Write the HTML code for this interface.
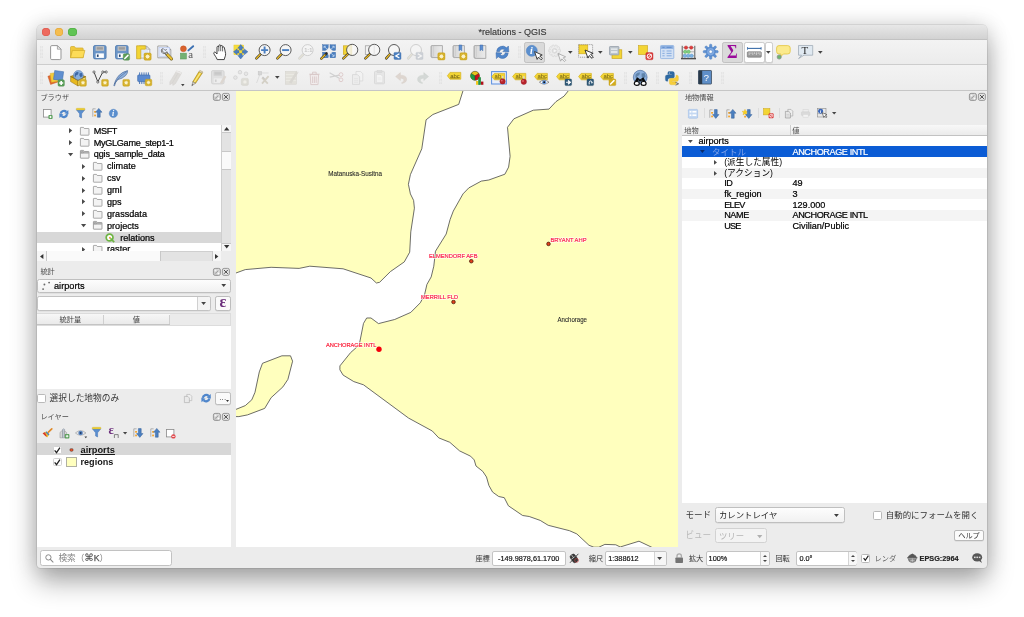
<!DOCTYPE html>
<html lang="ja">
<head>
<meta charset="utf-8">
<title>*relations - QGIS</title>
<style>
*{box-sizing:border-box;margin:0;padding:0}
html,body{width:1024px;height:617px;overflow:hidden;background:#fff}
body{font-family:"Liberation Sans","Noto Sans CJK JP",sans-serif;font-size:9.1px;color:#000;position:relative}
.abs{position:absolute}
#win{position:absolute;left:36.5px;top:24.5px;width:950.6px;height:543.3px;background:#ececec;border-radius:4.5px 4.5px 3.5px 3.5px;
 box-shadow:0 0 0 0.5px rgba(0,0,0,.15),0 14px 27px rgba(0,0,0,.32),0 0 21px rgba(0,0,0,.15)}
#winclip{position:absolute;left:0;top:0;width:100%;height:100%;border-radius:4.5px 4.5px 3.5px 3.5px;overflow:hidden}
/* coordinates inside #page are absolute page coords */
#page{position:absolute;left:-36.5px;top:-24.5px;width:1024px;height:617px;will-change:transform}
#titlebar{left:36px;top:24px;width:952px;height:16px;background:linear-gradient(#e9e9e9,#d2d2d2);border-bottom:0.5px solid #c2c2c2}
#title{left:412.5px;top:26.9px;width:200px;text-align:center;font-size:9px;line-height:11px;color:#3a3a3a;-webkit-text-stroke:.15px #3a3a3a}
.tl{position:absolute;top:28.1px;width:8.2px;height:8.2px;border-radius:50%}
.tb{position:absolute;left:36px;width:952px;background:linear-gradient(#f3f3f3,#ececec)}
.t{position:absolute;white-space:nowrap;line-height:12px}
.j{font-family:"Liberation Sans","Noto Sans CJK JP",sans-serif}
.ptitle{position:absolute;font-size:7.2px;line-height:10px;color:#4a4a4a;white-space:nowrap}
.dockbtn{position:absolute;width:7.4px;height:7.2px;border:0.8px solid #8a8a8a;border-radius:1.6px;background:#e4e4e4}
.white{position:absolute;background:#fff}
.row{position:absolute;white-space:nowrap;line-height:12px;font-size:9.1px;-webkit-text-stroke:.22px currentColor}
.cap{letter-spacing:-.4px}
.ns{-webkit-text-stroke:0}
svg{position:absolute;overflow:visible}

.combo{background:linear-gradient(#fdfdfd,#f1f1f1);border:.7px solid #bfbfbf;border-radius:2.4px;box-shadow:0 .5px .6px rgba(0,0,0,.1)}
.chk{background:#fff;border:.7px solid #b9b9b9;border-radius:1.6px}

.sbox{background:#fff;border:.7px solid #c4c4c4;border-radius:2px}
.sb{font-size:7.3px;color:#111;-webkit-text-stroke:.18px currentColor}
.spin{width:9.1px;height:13px;background:#f7f7f7;border-left:.6px solid #d4d4d4;border-radius:0 2px 2px 0}
.spin:before{content:"";position:absolute;left:2.3px;top:2.7px;border:2.3px solid transparent;border-top:0;border-bottom:2.2px solid #444}
.spin:after{content:"";position:absolute;left:2.3px;top:8.3px;border:2.3px solid transparent;border-bottom:0;border-top:2.2px solid #444}
.sbl{font-size:7.2px;color:#3c3c3c}
</style>
</head>
<body>
<div id="win"><div id="winclip"><div id="page">

<!-- title bar -->
<div id="titlebar" class="abs"></div>
<div class="tl" style="left:42px;background:#ee6a5e;box-shadow:inset 0 0 0 .5px #d95548"></div>
<div class="tl" style="left:55.2px;background:#f5bd4f;box-shadow:inset 0 0 0 .5px #dea133"></div>
<div class="tl" style="left:68.4px;background:#61c455;box-shadow:inset 0 0 0 .5px #4aa73c"></div>
<div id="title" class="abs">*relations - QGIS</div>

<!-- toolbars -->
<div class="tb" style="top:40px;height:24.9px;border-bottom:0.9px solid #cdcdcd"></div>
<div class="tb" style="top:64.6px;height:26.4px;border-bottom:1.1px solid #c6c6c6"></div>
<div id="icons1"><svg style="left:40px;top:46.2px" width="3" height="12" viewBox="0 0 3 12"><path d="M.7 0V12M2.3 0V12" stroke="#cdcdcd" stroke-width=".6" stroke-dasharray=".7 .7"/></svg>
<svg style="left:203.2px;top:46.2px" width="3" height="12" viewBox="0 0 3 12"><path d="M.7 0V12M2.3 0V12" stroke="#cdcdcd" stroke-width=".6" stroke-dasharray=".7 .7"/></svg>
<svg style="left:518.2px;top:46.2px" width="3" height="12" viewBox="0 0 3 12"><path d="M.7 0V12M2.3 0V12" stroke="#cdcdcd" stroke-width=".6" stroke-dasharray=".7 .7"/></svg>
<svg style="left:40px;top:71.8px" width="3" height="12" viewBox="0 0 3 12"><path d="M.7 0V12M2.3 0V12" stroke="#cdcdcd" stroke-width=".6" stroke-dasharray=".7 .7"/></svg>
<svg style="left:159.6px;top:71.8px" width="3" height="12" viewBox="0 0 3 12"><path d="M.7 0V12M2.3 0V12" stroke="#cdcdcd" stroke-width=".6" stroke-dasharray=".7 .7"/></svg>
<svg style="left:439.2px;top:71.8px" width="3" height="12" viewBox="0 0 3 12"><path d="M.7 0V12M2.3 0V12" stroke="#cdcdcd" stroke-width=".6" stroke-dasharray=".7 .7"/></svg>
<svg style="left:624.2px;top:71.8px" width="3" height="12" viewBox="0 0 3 12"><path d="M.7 0V12M2.3 0V12" stroke="#cdcdcd" stroke-width=".6" stroke-dasharray=".7 .7"/></svg>
<svg style="left:656.2px;top:71.8px" width="3" height="12" viewBox="0 0 3 12"><path d="M.7 0V12M2.3 0V12" stroke="#cdcdcd" stroke-width=".6" stroke-dasharray=".7 .7"/></svg>
<svg style="left:688.6px;top:71.8px" width="3" height="12" viewBox="0 0 3 12"><path d="M.7 0V12M2.3 0V12" stroke="#cdcdcd" stroke-width=".6" stroke-dasharray=".7 .7"/></svg>
<svg style="left:720.8px;top:71.8px" width="3" height="12" viewBox="0 0 3 12"><path d="M.7 0V12M2.3 0V12" stroke="#cdcdcd" stroke-width=".6" stroke-dasharray=".7 .7"/></svg>
<svg style="left:50.2px;top:45px" width="11.6" height="15.2" viewBox="0 0 11.6 15.2"><path d="M.6 1.8Q.6 .6 1.8 .6L7.4 .6L11 4.2L11 13.4Q11 14.6 9.8 14.6L1.8 14.6Q.6 14.6 .6 13.4Z" fill="#fff" stroke="#8c8c8c" stroke-width=".9"/><path d="M7.4 .6L7.4 4.2L11 4.2Z" fill="#ededed" stroke="#8c8c8c" stroke-width=".7" stroke-linejoin="round"/></svg>
<svg style="left:70px;top:46px" width="15.4" height="12.2" viewBox="0 0 15.4 12.2"><path d="M.5 1.5Q.5 .5 1.5 .5L4.4 .5L5.6 2L12.4 2Q13.2 2 13.2 2.8L13.2 11.6L.5 11.6Z" fill="#f1c93c" stroke="#cfa92a" stroke-width=".7"/><path d="M2.4 4.4L14.9 4.4L13.1 11.7L.5 11.7Z" fill="#fddc58" stroke="#cfa92a" stroke-width=".7" stroke-linejoin="round"/></svg>
<svg style="left:92.8px;top:44.7px" width="13.6" height="14.4" viewBox="0 0 13.6 14.4"><rect x=".5" y=".5" width="12.6" height="13.4" rx="1.5" fill="#6b95c7" stroke="#4d78ad" stroke-width=".8"/><rect x="2.6" y="1.2" width="8.4" height="4.6" fill="#c2c2c2"/><rect x="3.7" y="2.2" width="6.2" height="2.4" fill="#9c9c9c"/><rect x="2.7" y="8.4" width="8.2" height="4.5" fill="#fff"/><rect x="3.9" y="9.5" width="1.7" height="2.4" fill="#27446e"/></svg>
<svg style="left:114.6px;top:44.7px" width="15" height="15.6" viewBox="0 0 15 15.6"><rect x=".5" y=".5" width="12.6" height="13.4" rx="1.5" fill="#6b95c7" stroke="#4d78ad" stroke-width=".8"/><rect x="2.6" y="1.2" width="8.4" height="4.6" fill="#c2c2c2"/><rect x="3.7" y="2.2" width="6.2" height="2.4" fill="#9c9c9c"/><rect x="2.7" y="8.4" width="8.2" height="4.5" fill="#fff"/><rect x="3.9" y="9.5" width="1.7" height="2.4" fill="#27446e"/><rect x="8.2" y="8.8" width="6.4" height="6.4" rx="1.3" fill="#5c9d57" stroke="#4a8746" stroke-width=".4"/><path d="M9.8 13.6L13 10.4" stroke="#fff" stroke-width="1.5" stroke-linecap="round"/></svg>
<svg style="left:136px;top:44.6px" width="15.6" height="15.2" viewBox="0 0 15.6 15.2"><path d="M3.2 1L10.4 1L13.8 4.4L13.8 13L3.2 13Z" fill="#fff" stroke="#9a9a9a" stroke-width=".8"/><path d="M10.4 1L10.4 4.4L13.8 4.4Z" fill="#e4e4e4" stroke="#9a9a9a" stroke-width=".6"/><rect x="4.4" y="4.6" width="8" height="7.2" fill="#dfe7f6"/><path d="M.6 .8L9.4 .8L9.4 4.2L4.8 4.2L4.8 13.8L.6 13.8Z" fill="#f3d534" stroke="#c9a41c" stroke-width=".7"/><rect x="8" y="8" width="7.2" height="7.2" rx="1.3" fill="#d6b12a" stroke="#c29c16" stroke-width=".4"/><path d="M11.60 9.10L12.17 10.21L13.37 9.83L12.99 11.03L14.10 11.60L12.99 12.17L13.37 13.37L12.17 12.99L11.60 14.10L11.03 12.99L9.83 13.37L10.21 12.17L9.10 11.60L10.21 11.03L9.83 9.83L11.03 10.21Z" fill="#fbf2c8"/></svg>
<svg style="left:157.3px;top:44.6px" width="16" height="15" viewBox="0 0 16 15"><path d="M.8 1L10.2 1L13.8 4.6L13.8 12.8L.8 12.8Z" fill="#fff" stroke="#8e8e8e" stroke-width=".8"/><path d="M10.2 1L10.2 4.6L13.8 4.6Z" fill="#e4e4e4" stroke="#8e8e8e" stroke-width=".6"/><rect x="2" y="2.4" width="10.6" height="9.2" fill="#e6ecfb" stroke="#b9c8ee" stroke-width=".7"/><path d="M9.6 8.8L14.4 13.8" stroke="#6a5a1a" stroke-width="3.2" stroke-linecap="round"/><path d="M9.6 8.8L14.4 13.8" stroke="#e9c035" stroke-width="2.1" stroke-linecap="round"/><path d="M5.4 3.6A2.8 2.8 0 1 0 9.8 6.6L10.6 8.6L8.8 9.6L7.4 7.6A2.8 2.8 0 0 1 5.4 3.6Z" fill="#e2e2e2" stroke="#555" stroke-width=".7"/><path d="M6.2 3.4L8 5.4L9.8 4.4" fill="none" stroke="#555" stroke-width=".7"/></svg>
<svg style="left:179.6px;top:44.6px" width="14.4" height="15" viewBox="0 0 14.4 15"><circle cx="3.4" cy="3.8" r="3" fill="#d8622d" stroke="#c24f1e" stroke-width=".4"/><rect x=".5" y="8.2" width="5.8" height="5.8" fill="#73b173" stroke="#5d9c5d" stroke-width=".6"/><path d="M8.4 5.4L13.2 1.2" stroke="#3c70b2" stroke-width="1.9" stroke-linecap="round"/><text x="8.3" y="13.5" font-family="Liberation Serif, serif" font-size="10.8" fill="#555">a</text></svg>
<svg style="left:212.6px;top:44px" width="14" height="16.4" viewBox="0 0 14 16.4"><path d="M4.2 15.6C3.4 13 1.4 11.4 .8 9.4C.5 8.2 1.8 7.6 2.8 8.6L4 10L4 3.2C4 2 5.8 2 5.8 3.2L5.8 1.8C5.8 .5 7.7 .5 7.7 1.8L7.7 2.4C7.7 1.2 9.6 1.2 9.6 2.4L9.6 3.6C9.6 2.6 11.4 2.6 11.4 3.8L12.6 9.6C12.8 12 11.6 13.4 11.2 15.6Z" fill="#fff" stroke="#2e2e2e" stroke-width=".9" stroke-linejoin="round"/><path d="M5.8 3.2V7.4M7.7 2.4V7.2M9.6 3.6V7.4" stroke="#2e2e2e" stroke-width=".7"/></svg>
<svg style="left:233.2px;top:44.3px" width="15.4" height="15.4" viewBox="0 0 15.4 15.4"><rect x=".9" y="1" width="9.8" height="9.8" fill="#f5dc3c" stroke="#e3c62a" stroke-width=".4"/><g transform="translate(7.7 7.8)"><path d="M0 -7.2L2.9 -3.6L1.2 -3.6L1.2 -1.7L-1.2 -1.7L-1.2 -3.6L-2.9 -3.6Z" transform="rotate(0)" fill="#4a7fc0" stroke="#3a68a6" stroke-width=".45" stroke-linejoin="round"/><path d="M0 -7.2L2.9 -3.6L1.2 -3.6L1.2 -1.7L-1.2 -1.7L-1.2 -3.6L-2.9 -3.6Z" transform="rotate(90)" fill="#4a7fc0" stroke="#3a68a6" stroke-width=".45" stroke-linejoin="round"/><path d="M0 -7.2L2.9 -3.6L1.2 -3.6L1.2 -1.7L-1.2 -1.7L-1.2 -3.6L-2.9 -3.6Z" transform="rotate(180)" fill="#4a7fc0" stroke="#3a68a6" stroke-width=".45" stroke-linejoin="round"/><path d="M0 -7.2L2.9 -3.6L1.2 -3.6L1.2 -1.7L-1.2 -1.7L-1.2 -3.6L-2.9 -3.6Z" transform="rotate(270)" fill="#4a7fc0" stroke="#3a68a6" stroke-width=".45" stroke-linejoin="round"/></g></svg>
<svg style="left:254.6px;top:44.2px" width="15.8" height="15.8" viewBox="0 0 15.8 15.8"><path d="M6.110950000000001 9.589049999999999L1.4 14.4" stroke="#2a2a2a" stroke-width="2.5" stroke-linecap="round"/><path d="M5.110950000000001 10.589049999999999L1.4 14.4" stroke="#e9ba24" stroke-width="1.4" stroke-linecap="round"/><circle cx="9.6" cy="6.1" r="5.5" fill="#f6f6f6" stroke="#4a4a4a" stroke-width=".9"/><path d="M9.6 2.6V9.6M6.1 6.1H13.1" stroke="#4a7fc0" stroke-width="1.9"/></svg>
<svg style="left:276.4px;top:44.2px" width="15.8" height="15.8" viewBox="0 0 15.8 15.8"><path d="M6.110950000000001 9.589049999999999L1.4 14.4" stroke="#2a2a2a" stroke-width="2.5" stroke-linecap="round"/><path d="M5.110950000000001 10.589049999999999L1.4 14.4" stroke="#e9ba24" stroke-width="1.4" stroke-linecap="round"/><circle cx="9.6" cy="6.1" r="5.5" fill="#f6f6f6" stroke="#4a4a4a" stroke-width=".9"/><path d="M6.1 6.1H13.1" stroke="#4a7fc0" stroke-width="1.9"/></svg>
<svg style="left:298px;top:44.2px" width="15.8" height="15.8" viewBox="0 0 15.8 15.8"><path d="M6.110950000000001 9.589049999999999L1.4 14.4" stroke="#d0d0d0" stroke-width="2.5" stroke-linecap="round"/><path d="M5.110950000000001 10.589049999999999L1.4 14.4" stroke="#e4e2d6" stroke-width="1.4" stroke-linecap="round"/><circle cx="9.6" cy="6.1" r="5.5" fill="#f4f4f4" stroke="#c9c9c9" stroke-width=".9"/><text x="6.2" y="8.2" font-family="Liberation Sans, sans-serif" font-size="5.6" fill="#c4c4c4" font-weight="bold">1:1</text></svg>
<svg style="left:319.8px;top:43.8px" width="16.4" height="16.2" viewBox="0 0 16.4 16.2"><rect x="2.6" y="0.8" width="5.6" height="5.6" fill="#4a7fc0" stroke="#3a68a6" stroke-width=".4"/><path d="M6.9 5.1L4.300000000000001 2.4999999999999996M4.1000000000000005 4.1V2.3H5.9" fill="none" stroke="#d4e3f7" stroke-width=".75"/><rect x="10" y="0.8" width="5.6" height="5.6" fill="#4a7fc0" stroke="#3a68a6" stroke-width=".4"/><path d="M11.3 5.1L13.9 2.4999999999999996M14.100000000000001 4.1V2.3H12.3" fill="none" stroke="#d4e3f7" stroke-width=".75"/><rect x="2.6" y="8.2" width="5.6" height="5.6" fill="#4a7fc0" stroke="#3a68a6" stroke-width=".4"/><path d="M6.9 9.5L4.300000000000001 12.1M4.1000000000000005 10.5V12.3H5.9" fill="none" stroke="#d4e3f7" stroke-width=".75"/><rect x="10" y="8.2" width="5.6" height="5.6" fill="#4a7fc0" stroke="#3a68a6" stroke-width=".4"/><path d="M11.3 9.5L13.9 12.1M14.100000000000001 10.5V12.3H12.3" fill="none" stroke="#d4e3f7" stroke-width=".75"/><path d="M9.1 3.4L13 7.3L9.1 11.2L5.2 7.3Z" fill="#efefef" stroke="#dcdcdc" stroke-width=".3"/><path d="M6.6 9.4L1.3 14.7" stroke="#2a2a2a" stroke-width="2.4" stroke-linecap="round"/><path d="M4.9 11.1L1.3 14.7" stroke="#e9ba24" stroke-width="1.4" stroke-linecap="round"/></svg>
<svg style="left:341.8px;top:44.2px" width="16.4" height="15.8" viewBox="0 0 16.4 15.8"><rect x="1.3" y="1.8" width="6" height="8.6" fill="#f3d534" stroke="#c9a41c" stroke-width=".6"/><defs><linearGradient id="lg" x1="0" x2="1"><stop offset="0" stop-color="#fdfbe8"/><stop offset=".45" stop-color="#efe9cf"/><stop offset=".55" stop-color="#fafafa"/><stop offset="1" stop-color="#f2f2f2"/></linearGradient></defs><path d="M6.64024 9.45976L1.4 14.4" stroke="#2a2a2a" stroke-width="2.5" stroke-linecap="round"/><path d="M5.64024 10.45976L1.4 14.4" stroke="#e9ba24" stroke-width="1.4" stroke-linecap="round"/><circle cx="10.2" cy="5.9" r="5.6" fill="url(#lg)" stroke="#4a4a4a" stroke-width=".9"/></svg>
<svg style="left:363.7px;top:44.2px" width="16.4" height="15.8" viewBox="0 0 16.4 15.8"><rect x="1.3" y="1.8" width="6" height="8.6" fill="#f2f2f2" stroke="#9a9a9a" stroke-width=".7"/><path d="M6.64024 9.45976L1.4 14.4" stroke="#2a2a2a" stroke-width="2.5" stroke-linecap="round"/><path d="M5.64024 10.45976L1.4 14.4" stroke="#e9ba24" stroke-width="1.4" stroke-linecap="round"/><circle cx="10.2" cy="5.9" r="5.6" fill="#f6f6f6" stroke="#4a4a4a" stroke-width=".9"/><path d="M10.2 .8V11" stroke="#ddd" stroke-width=".8"/></svg>
<svg style="left:385.2px;top:44.2px" width="16.4" height="16" viewBox="0 0 16.4 16"><path d="M5.510950000000001 9.489049999999999L1.2 14.4" stroke="#2a2a2a" stroke-width="2.5" stroke-linecap="round"/><path d="M4.510950000000001 10.489049999999999L1.2 14.4" stroke="#e9ba24" stroke-width="1.4" stroke-linecap="round"/><circle cx="9" cy="6" r="5.5" fill="#f6f6f6" stroke="#4a4a4a" stroke-width=".9"/><rect x="9" y="8.4" width="7" height="7" rx=".8" fill="#4a7fc0" stroke="#3a68a6" stroke-width=".4"/><path d="M14.4 9.8L10.8 11.9L14.4 14" fill="none" stroke="#fff" stroke-width="1.3"/></svg>
<svg style="left:407.2px;top:44.2px" width="16.4" height="16" viewBox="0 0 16.4 16"><path d="M5.510950000000001 9.489049999999999L1.2 14.4" stroke="#d0d0d0" stroke-width="2.5" stroke-linecap="round"/><path d="M4.510950000000001 10.489049999999999L1.2 14.4" stroke="#e4e2d6" stroke-width="1.4" stroke-linecap="round"/><circle cx="9" cy="6" r="5.5" fill="#f4f4f4" stroke="#c9c9c9" stroke-width=".9"/><rect x="9" y="8.4" width="7" height="7" rx=".8" fill="#ccd0d6" stroke="#c0c4ca" stroke-width=".4"/><path d="M10.8 9.8L14.4 11.9L10.8 14" fill="none" stroke="#f4f4f4" stroke-width="1.3"/></svg>
<svg style="left:429.6px;top:44.7px" width="15.6" height="15.2" viewBox="0 0 15.6 15.2"><defs><linearGradient id="sg" x1="0" x2="1"><stop offset="0" stop-color="#bdbdbd"/><stop offset=".18" stop-color="#f4f4f4"/><stop offset=".3" stop-color="#dcdcdc"/><stop offset="1" stop-color="#ececec"/></linearGradient></defs><path d="M1 1.6Q1 .6 2 .6L12.4 .6L12.4 12.6L2.4 12.6Q1 12.6 1 11.2Z" fill="url(#sg)" stroke="#9c9c9c" stroke-width=".8"/><path d="M3.2 .8V11.0Q3.2 12.6 1.8 12.6" fill="none" stroke="#a8a8a8" stroke-width=".6"/><rect x="7.8" y="7.8" width="7.2" height="7.2" rx="1.3" fill="#d6b12a" stroke="#c29c16" stroke-width=".4"/><path d="M11.40 8.90L11.97 10.01L13.17 9.63L12.79 10.83L13.90 11.40L12.79 11.97L13.17 13.17L11.97 12.79L11.40 13.90L10.83 12.79L9.63 13.17L10.01 11.97L8.90 11.40L10.01 10.83L9.63 9.63L10.83 10.01Z" fill="#fbf2c8"/></svg>
<svg style="left:451.6px;top:44.7px" width="15.6" height="15.2" viewBox="0 0 15.6 15.2"><defs><linearGradient id="sg" x1="0" x2="1"><stop offset="0" stop-color="#bdbdbd"/><stop offset=".18" stop-color="#f4f4f4"/><stop offset=".3" stop-color="#dcdcdc"/><stop offset="1" stop-color="#ececec"/></linearGradient></defs><path d="M1 1.6Q1 .6 2 .6L12.4 .6L12.4 12.6L2.4 12.6Q1 12.6 1 11.2Z" fill="url(#sg)" stroke="#9c9c9c" stroke-width=".8"/><path d="M3.2 .8V11.0Q3.2 12.6 1.8 12.6" fill="none" stroke="#a8a8a8" stroke-width=".6"/><path d="M7 0L9.8 0L9.8 5.8L8.4 4.6L7 5.8Z" fill="#5c8fd2" stroke="#3a68a6" stroke-width=".5"/><rect x="7.8" y="7.8" width="7.2" height="7.2" rx="1.3" fill="#d6b12a" stroke="#c29c16" stroke-width=".4"/><path d="M11.40 8.90L11.97 10.01L13.17 9.63L12.79 10.83L13.90 11.40L12.79 11.97L13.17 13.17L11.97 12.79L11.40 13.90L10.83 12.79L9.63 13.17L10.01 11.97L8.90 11.40L10.01 10.83L9.63 9.63L10.83 10.01Z" fill="#fbf2c8"/></svg>
<svg style="left:473.4px;top:44.7px" width="14" height="14.8" viewBox="0 0 14 14.8"><defs><linearGradient id="sg" x1="0" x2="1"><stop offset="0" stop-color="#bdbdbd"/><stop offset=".18" stop-color="#f4f4f4"/><stop offset=".3" stop-color="#dcdcdc"/><stop offset="1" stop-color="#ececec"/></linearGradient></defs><path d="M1 1.6Q1 .6 2 .6L12.8 .6L12.8 13.4L2.4 13.4Q1 13.4 1 12.0Z" fill="url(#sg)" stroke="#9c9c9c" stroke-width=".8"/><path d="M3.2 .8V11.8Q3.2 13.4 1.8 13.4" fill="none" stroke="#a8a8a8" stroke-width=".6"/><path d="M7 0L9.8 0L9.8 5.8L8.4 4.6L7 5.8Z" fill="#5c8fd2" stroke="#3a68a6" stroke-width=".5"/></svg>
<svg style="left:494.6px;top:44.6px" width="14.8" height="14.6" viewBox="0 0 14.8 14.6"><path d="M1.6 6.4A5.9 5.9 0 0 1 11.6 2.8L13.4 1L13.8 7L7.8 6.6L9.6 4.8A3.3 3.3 0 0 0 4.4 6.8Z" fill="#4f86cb" stroke="#3a68a6" stroke-width=".5" stroke-linejoin="round"/><path d="M13.2 8.2A5.9 5.9 0 0 1 3.2 11.8L1.4 13.6L1 7.6L7 8L5.2 9.8A3.3 3.3 0 0 0 10.4 7.8Z" fill="#4f86cb" stroke="#3a68a6" stroke-width=".5" stroke-linejoin="round"/></svg>
<div class="abs" style="left:524.2px;top:42.2px;width:20.6px;height:20.4px;background:#dadada;border:.7px solid #c2c2c2;border-radius:2.2px"></div>
<svg style="left:526.4px;top:44.6px" width="17" height="16" viewBox="0 0 17 16"><circle cx="5.8" cy="5.8" r="5.5" fill="#5b8fce" stroke="#4a7fc0" stroke-width=".5"/><text x="4" y="9.3" font-family="Liberation Serif, serif" font-style="italic" font-weight="bold" font-size="10" fill="#fff">i</text><g transform="translate(8.6 6.6) rotate(-18)"><path d="M0 0L0 8.2L2 6.4L3.6 9.8L5.2 9L3.6 5.8L6.2 5.6Z" fill="#fff" stroke="#2a2a2a" stroke-width=".8" stroke-linejoin="round"/></g></svg>
<svg style="left:548px;top:43.8px" width="16" height="16.4" viewBox="0 0 16 16.4"><path d="M10.83 5.60L12.51 5.75L12.51 7.85L10.83 8.00L10.73 8.32L12.00 9.42L10.76 11.12L9.32 10.26L9.05 10.45L9.42 12.09L7.43 12.74L6.77 11.20L6.43 11.20L5.77 12.74L3.78 12.09L4.15 10.45L3.88 10.26L2.44 11.12L1.20 9.42L2.47 8.32L2.37 8.00L0.69 7.85L0.69 5.75L2.37 5.60L2.47 5.28L1.20 4.18L2.44 2.48L3.88 3.34L4.15 3.15L3.78 1.51L5.77 0.86L6.43 2.40L6.77 2.40L7.43 0.86L9.42 1.51L9.05 3.15L9.32 3.34L10.76 2.48L12.00 4.18L10.73 5.28Z" fill="#ececec" stroke="#cfcfcf" stroke-width="0.5" stroke-linejoin="round"/><circle cx="6.6" cy="6.8" r="2.4" fill="#dcdcdc" stroke="#cfcfcf" stroke-width="0.5"/><path d="M5.6 5.2L8.8 6.8L5.6 8.4Z" fill="#f6f6f6"/><g transform="translate(10 9.4) rotate(-18)" opacity=".35"><path d="M0 0L0 8.2L2 6.4L3.6 9.8L5.2 9L3.6 5.8L6.2 5.6Z" fill="#fff" stroke="#2a2a2a" stroke-width=".8" stroke-linejoin="round"/></g></svg>
<svg style="left:568px;top:50.8px" width="4.6" height="2.8" viewBox="0 0 4.6 2.8"><path d="M0 0L4.6 0L2.3 2.8Z" fill="#444"/></svg>
<svg style="left:578.2px;top:44.4px" width="16" height="16" viewBox="0 0 16 16"><rect x=".6" y=".6" width="14" height="12.6" fill="#f4f4f4" stroke="#6a6a6a" stroke-width=".6" stroke-dasharray="1.2 .8"/><rect x="1" y="1" width="8.8" height="8.8" fill="#f3d534" stroke="#c9a41c" stroke-width=".6"/><g transform="translate(7 6) rotate(-20) scale(1.05)"><path d="M0 0L0 8.2L2 6.4L3.6 9.8L5.2 9L3.6 5.8L6.2 5.6Z" fill="#fff" stroke="#2a2a2a" stroke-width=".8" stroke-linejoin="round"/></g></svg>
<svg style="left:598.2px;top:50.8px" width="4.6" height="2.8" viewBox="0 0 4.6 2.8"><path d="M0 0L4.6 0L2.3 2.8Z" fill="#444"/></svg>
<svg style="left:609px;top:45.8px" width="13.4" height="13" viewBox="0 0 13.4 13"><rect x="3" y="3.8" width="9.8" height="8.6" fill="#f3d534" stroke="#c9a41c" stroke-width=".7"/><rect x=".5" y=".5" width="9.4" height="8.4" rx=".6" fill="#bcc4cb" stroke="#8f9aa5" stroke-width=".7"/><path d="M2 3.2H8.4M2 6H8.4" stroke="#eef1f4" stroke-width="1.3"/></svg>
<svg style="left:627.8px;top:50.8px" width="4.6" height="2.8" viewBox="0 0 4.6 2.8"><path d="M0 0L4.6 0L2.3 2.8Z" fill="#444"/></svg>
<svg style="left:638.3px;top:44.9px" width="15.4" height="15.2" viewBox="0 0 15.4 15.2"><rect x=".6" y=".6" width="9" height="9" fill="#f3d534" stroke="#c9a41c" stroke-width=".6"/><rect x="7.8" y="7.6" width="7.2" height="7.2" rx="1.3" fill="#d93a3a" stroke="#c22a2a" stroke-width=".4"/><circle cx="11.4" cy="11.2" r="2.2" fill="none" stroke="#fff" stroke-width="1"/><path d="M9.4 13.2L13.4 9.2" stroke="#fff" stroke-width="1"/></svg>
<svg style="left:659.8px;top:45px" width="14.4" height="14.2" viewBox="0 0 14.4 14.2"><rect x=".5" y=".5" width="13.3" height="13.1" rx=".8" fill="#d3e1f4" stroke="#8db0e0" stroke-width=".8"/><rect x=".9" y=".9" width="12.5" height="3" fill="#8db0e0"/><path d="M2.4 2.4H4.6M6.6 2.4H11.6" stroke="#5e8ccc" stroke-width=".9"/><path d="M2.4 6H4.6M6.6 6H11.6M2.4 8.4H4.6M6.6 8.4H11.6M2.4 10.8H4.6M6.6 10.8H11.6" stroke="#7ea6dc" stroke-width=".9"/></svg>
<svg style="left:681.2px;top:44.8px" width="15" height="14.8" viewBox="0 0 15 14.8"><path d="M1.2 .8V13M13.8 .8V13" stroke="#5a5a5a" stroke-width="1"/><path d="M1.2 2.6H13.8M1.2 6.8H13.8M1.2 10.8H13.8" stroke="#8a8a8a" stroke-width=".6"/><path d="M0 13.6H15" stroke="#4e4e4e" stroke-width="1.5"/><circle cx="5" cy="2.6" r="1.7" fill="#dc3c3c" stroke="#b82222" stroke-width=".4"/><circle cx="10.2" cy="2.6" r="1.7" fill="#dc3c3c" stroke="#b82222" stroke-width=".4"/><circle cx="4.2" cy="6.8" r="1.7" fill="#7fd07f" stroke="#58a858" stroke-width=".4"/><circle cx="7.6" cy="6.8" r="1.7" fill="#7fd07f" stroke="#58a858" stroke-width=".4"/><circle cx="3.8" cy="10.8" r="1.7" fill="#7db4e4" stroke="#5590c8" stroke-width=".4"/><circle cx="7.2" cy="10.8" r="1.7" fill="#7db4e4" stroke="#5590c8" stroke-width=".4"/><circle cx="10.6" cy="10.8" r="1.7" fill="#7db4e4" stroke="#5590c8" stroke-width=".4"/></svg>
<svg style="left:702.8px;top:44.4px" width="15.4" height="15.4" viewBox="0 0 15.4 15.4"><g transform="translate(7.7 7.7)" fill="#6293d4" stroke="#4a7fc0" stroke-width=".5"><rect x="-1.15" y="-7.5" width="2.3" height="4.4" rx=".9" transform="rotate(0)" /><rect x="-1.15" y="-7.5" width="2.3" height="4.4" rx=".9" transform="rotate(45)" /><rect x="-1.15" y="-7.5" width="2.3" height="4.4" rx=".9" transform="rotate(90)" /><rect x="-1.15" y="-7.5" width="2.3" height="4.4" rx=".9" transform="rotate(135)" /><rect x="-1.15" y="-7.5" width="2.3" height="4.4" rx=".9" transform="rotate(180)" /><rect x="-1.15" y="-7.5" width="2.3" height="4.4" rx=".9" transform="rotate(225)" /><rect x="-1.15" y="-7.5" width="2.3" height="4.4" rx=".9" transform="rotate(270)" /><rect x="-1.15" y="-7.5" width="2.3" height="4.4" rx=".9" transform="rotate(315)" /><circle r="4.7"/><circle r="3.1" fill="#7aa5df" stroke="#8fb4e6" stroke-width=".6"/><circle r="1.6" fill="#fff" stroke="#4a7fc0" stroke-width=".4"/></g></svg>
<div class="abs" style="left:722px;top:42.2px;width:20.6px;height:20.4px;background:#dadada;border:.7px solid #c2c2c2;border-radius:2.2px"></div>
<div class="t" style="left:726.8px;top:43.4px;font-family:'Liberation Serif',serif;font-size:18px;line-height:19px;color:#9a0c9a;font-weight:bold;transform:scaleX(.9);transform-origin:0 0">Σ</div>
<div class="abs" style="left:744px;top:42.2px;width:20.5px;height:20.4px;background:#fff;border:.7px solid #cdcdcd;border-radius:2.2px;box-shadow:0 .6px .6px rgba(0,0,0,.12)"></div>
<div class="abs" style="left:764.9px;top:42.2px;width:7.7px;height:20.4px;background:#fff;border:.7px solid #cdcdcd;border-radius:2.2px;box-shadow:0 .6px .6px rgba(0,0,0,.12)"></div>
<svg style="left:747px;top:47.4px" width="14.6" height="10.8" viewBox="0 0 14.6 10.8"><path d="M.4 1.4H14.2" stroke="#3b6da8" stroke-width="1.1"/><path d="M.5 0V2.8M14.1 0V2.8" stroke="#3b6da8" stroke-width=".8"/><rect x=".3" y="4.8" width="14" height="5.4" rx=".8" fill="#9a9a9a" stroke="#6e6e6e" stroke-width=".6"/><path d="M2.2 5.2V8M4 5.2V7M5.8 5.2V8M7.6 5.2V7M9.4 5.2V8M11.2 5.2V7M13 5.2V8" stroke="#e4e4e4" stroke-width=".7"/></svg>
<svg style="left:766.4px;top:50.8px" width="4.6" height="2.8" viewBox="0 0 4.6 2.8"><path d="M0 0L4.6 0L2.3 2.8Z" fill="#444"/></svg>
<svg style="left:776.4px;top:44.6px" width="15" height="14.8" viewBox="0 0 15 14.8"><path d="M3 .6H11.6Q14.2 .6 14.2 3V6.6Q14.2 9 11.6 9H7.4L4.4 12L5 9H3Q.6 9 .6 6.6V3Q.6 .6 3 .6Z" fill="#fbea8c" stroke="#e2c43e" stroke-width=".8" stroke-linejoin="round"/><circle cx="3.2" cy="12" r="2.1" fill="#6db56d" stroke="#8a8a8a" stroke-width=".7"/></svg>
<svg style="left:797.8px;top:44.8px" width="15.6" height="14.6" viewBox="0 0 15.6 14.6"><path d="M.5 .5H14.7V10.2H6L.6 13.6L3.6 10.2H.5Z" fill="#e0e9f1" stroke="#9aa5b0" stroke-width=".7" stroke-linejoin="round"/><text x="3.6" y="9" font-family="Liberation Serif, serif" font-size="11" fill="#2a2a2a">T</text></svg>
<svg style="left:817.8px;top:50.8px" width="4.6" height="2.8" viewBox="0 0 4.6 2.8"><path d="M0 0L4.6 0L2.3 2.8Z" fill="#444"/></svg></div><!--/icons1-->
<div id="icons2"><svg style="left:47.8px;top:69.6px" width="16.8" height="16.6" viewBox="0 0 16.8 16.6"><g transform="rotate(-18 5 9)"><rect x="1" y="4.8" width="8.6" height="8.6" fill="#e0682f" stroke="#c4551f" stroke-width=".4"/></g><g transform="rotate(-8 7 8)"><rect x="2.8" y="2.8" width="9" height="9" fill="#f3cb3a" stroke="#d3aa22" stroke-width=".4"/></g><g transform="rotate(8 10 6)"><rect x="6" y="1" width="9" height="9" fill="#5f8fcf" stroke="#3f6eae" stroke-width=".5"/></g><rect x="10" y="9.8" width="6.4" height="6.4" rx="1.3" fill="#5a9f5a" stroke="#488a48" stroke-width=".4"/><path d="M13.2 11V15M11.2 13H15.2" stroke="#fff" stroke-width="1.6"/></svg>
<svg style="left:69.6px;top:69.6px" width="16.8" height="16.6" viewBox="0 0 16.8 16.6"><path d="M.6 6.4L8 10.2L8 16L.6 11.6Z" fill="#e8b91e" stroke="#8a6a10" stroke-width=".5"/><path d="M8 10.2L15.6 6.6L15.6 12L8 16Z" fill="#f8e36a" stroke="#8a6a10" stroke-width=".5"/><path d="M.6 6.4L7.6 3.4L15.6 6.6L8 10.2Z" fill="#c99d18" stroke="#8a6a10" stroke-width=".5"/><circle cx="8.4" cy="5.4" r="4.9" fill="#86aede" stroke="#4d76b2" stroke-width=".5"/><path d="M5 3.4Q6.6 1.6 8.6 2.2L8 4.4L6 5.6L5.4 7.6Q4.2 5.6 5 3.4ZM9.6 3.2L12 3L12.6 5.8L10.8 7.6L9.4 5.6Z" fill="#3e68a6"/><path d="M.6 6.4L8 10.2L15.6 6.6" fill="none" stroke="#8a6a10" stroke-width=".5"/><path d="M3 7.8L8 10.4L13.4 7.8L13.4 9.6L8 12.4L3 9.6Z" fill="#e8b91e" opacity="0"/><rect x="9.6" y="9.4" width="6.8" height="6.8" rx="1.3" fill="#d6b12a" stroke="#c29c16" stroke-width=".4"/><path d="M13.00 10.50L13.50 11.60L14.63 11.17L14.20 12.30L15.30 12.80L14.20 13.30L14.63 14.43L13.50 14.00L13.00 15.10L12.50 14.00L11.37 14.43L11.80 13.30L10.70 12.80L11.80 12.30L11.37 11.17L12.50 11.60Z" fill="#fbf2c8"/></svg>
<svg style="left:91.6px;top:69.8px" width="16.8" height="16.4" viewBox="0 0 16.8 16.4"><path d="M2 2L5.8 11.8L10.8 2L14 2" fill="none" stroke="#3c3c3c" stroke-width=".95"/><circle cx="2" cy="2" r="1.1" fill="#fff" stroke="#3c3c3c" stroke-width=".7"/><circle cx="5.8" cy="12" r="1.1" fill="#fff" stroke="#3c3c3c" stroke-width=".7"/><circle cx="10.8" cy="2" r="1.1" fill="#fff" stroke="#3c3c3c" stroke-width=".7"/><circle cx="14.2" cy="2" r="1.1" fill="#fff" stroke="#3c3c3c" stroke-width=".7"/><rect x="9.6" y="9.4" width="6.8" height="6.8" rx="1.3" fill="#d6b12a" stroke="#c29c16" stroke-width=".4"/><path d="M13.00 10.50L13.50 11.60L14.63 11.17L14.20 12.30L15.30 12.80L14.20 13.30L14.63 14.43L13.50 14.00L13.00 15.10L12.50 14.00L11.37 14.43L11.80 13.30L10.70 12.80L11.80 12.30L11.37 11.17L12.50 11.60Z" fill="#fbf2c8"/></svg>
<svg style="left:113px;top:69.6px" width="16.8" height="16.6" viewBox="0 0 16.8 16.6"><path d="M.8 15.6Q2.2 10 5 6.4Q9 1.8 14.6 .6Q14.8 3.4 12.6 5.6Q9.6 8.6 4.4 9.8Q2.2 12.4 1.6 15.8Z" fill="#8fb0dc" stroke="#3c5e90" stroke-width=".6" stroke-linejoin="round"/><path d="M1.4 14Q5 7 13.6 1.6" fill="none" stroke="#3c5e90" stroke-width=".5"/><rect x="9.8" y="9.4" width="6.8" height="6.8" rx="1.3" fill="#d6b12a" stroke="#c29c16" stroke-width=".4"/><path d="M13.20 10.50L13.70 11.60L14.83 11.17L14.40 12.30L15.50 12.80L14.40 13.30L14.83 14.43L13.70 14.00L13.20 15.10L12.70 14.00L11.57 14.43L12.00 13.30L10.90 12.80L12.00 12.30L11.57 11.17L12.70 11.60Z" fill="#fbf2c8"/></svg>
<svg style="left:136.6px;top:70.6px" width="15" height="15" viewBox="0 0 15 15"><path d="M2.6 1.4V13M4.8 1.4V13M7 1.4V13M9.2 1.4V13M11.4 1.4V13" stroke="#3f6eb0" stroke-width=".9"/><rect x=".7" y="4" width="12.2" height="6.6" rx=".8" fill="#5b8ad0" stroke="#3f6eb0" stroke-width=".7"/><rect x="8.2" y="8.2" width="6.6" height="6.6" rx="1.3" fill="#d6b12a" stroke="#c29c16" stroke-width=".4"/><path d="M11.50 9.30L11.96 10.39L13.06 9.94L12.61 11.04L13.70 11.50L12.61 11.96L13.06 13.06L11.96 12.61L11.50 13.70L11.04 12.61L9.94 13.06L10.39 11.96L9.30 11.50L10.39 11.04L9.94 9.94L11.04 10.39Z" fill="#fbf2c8"/></svg>
<svg style="left:168.4px;top:69.8px" width="15" height="16.2" viewBox="0 0 15 16.2"><g fill="#dddbd8" stroke="#cfcdca" stroke-width=".4"><path d="M8.6 .8L11.4 1.8L4.4 13.2L1.8 14.8L1.8 12Z"/><path d="M11 1.6L13.8 2.8L7.4 13.8L4.8 15.4L4.6 12.6Z"/></g><path d="M8.6 .8L11.4 1.8L10.6 3L8 2ZM11 1.6L13.8 2.8L13 4L10.4 2.8Z" fill="#ecebea"/></svg>
<svg style="left:180.8px;top:83.8px" width="3.6" height="2.2" viewBox="0 0 3.6 2.2"><path d="M0 0L3.6 0L1.8 2.2Z" fill="#444"/></svg>
<svg style="left:191.2px;top:69.6px" width="12" height="16.6" viewBox="0 0 12 16.6"><path d="M8 1.6L11.2 3.2L4.6 13.2L1.8 11.8Z" fill="#ecc730" stroke="#9a7c14" stroke-width=".6"/><path d="M9 2.2L10.2 2.8L3.6 12.8L2.6 12.2Z" fill="#f9e98a"/><path d="M8 1.6L8.8 .4L12 2L11.2 3.2Z" fill="#e8e0c8" stroke="#9a8a5a" stroke-width=".5"/><path d="M1.8 11.8L4.6 13.2L.8 15.8Z" fill="#d8d0c0" stroke="#6a6a6a" stroke-width=".5"/><path d="M1.4 14.2L2.2 14.8L.8 15.8Z" fill="#333"/></svg>
<svg style="left:211.4px;top:70.4px" width="15.4" height="15" viewBox="0 0 15.4 15"><rect x=".5" y=".5" width="12.6" height="13.4" rx="1.5" fill="#e0e0e0" stroke="#d0d0d0" stroke-width=".8"/><rect x="2.6" y="1.2" width="8.4" height="4.6" fill="#d2d2d2"/><rect x="3.7" y="2.2" width="6.2" height="2.4" fill="#c8c8c8"/><rect x="2.7" y="8.4" width="8.2" height="4.5" fill="#eee"/><rect x="3.9" y="9.5" width="1.7" height="2.4" fill="#cfcfcf"/><path d="M14.4 6.2L10 13.4" stroke="#dcd6d0" stroke-width="2.4"/></svg>
<svg style="left:233.2px;top:70.4px" width="16" height="15.4" viewBox="0 0 16 15.4"><g fill="#e6e6e6" stroke="#cdcdcd" stroke-width=".7"><circle cx="7" cy="2.2" r="1.8"/><circle cx="13" cy="3.8" r="1.8"/><circle cx="2.4" cy="7.6" r="1.8"/></g><rect x="8.4" y="8.4" width="7" height="7" rx="1.3" fill="#dddcd6" stroke="#cfcec8" stroke-width=".4"/><circle cx="11.9" cy="11.9" r="1.7" fill="#efeee8"/></svg>
<svg style="left:255.6px;top:71.4px" width="14.8" height="13.8" viewBox="0 0 14.8 13.8"><rect x="2.2" y=".6" width="3.4" height="3.4" fill="#d6d6d6" stroke="#c4c4c4" stroke-width=".5"/><path d="M5.6 2H12.6M3.6 4L.6 12" stroke="#cfcfcf" stroke-width=".6"/><path d="M6 6.6L11.8 12.6M12.6 5.2L6 12.6" stroke="#d4d0c6" stroke-width="1.8"/><path d="M6.6 5.8L8.6 8" stroke="#c8c8c8" stroke-width="1.2"/></svg>
<svg style="left:274.8px;top:76.2px" width="4.6" height="2.8" viewBox="0 0 4.6 2.8"><path d="M0 0L4.6 0L2.3 2.8Z" fill="#444"/></svg>
<svg style="left:285.4px;top:70.2px" width="14.4" height="15" viewBox="0 0 14.4 15"><rect x=".5" y="1.6" width="10.8" height="12.6" fill="#e2e0da" stroke="#d2d0ca" stroke-width=".5"/><path d="M.8 4.6H11M.8 7.6H11M.8 10.6H11" stroke="#efeee9" stroke-width=".7"/><path d="M12.6 1.4L5.2 13" stroke="#d9d7d2" stroke-width="2.6"/><path d="M12.2 1.2L13.6 2" stroke="#eee" stroke-width="1.6"/></svg>
<svg style="left:308.6px;top:70.8px" width="11" height="14.4" viewBox="0 0 11 14.4"><path d="M1.2 3.6H9.6L9 13.6H1.8Z" fill="#f2eded" stroke="#d6c4c4" stroke-width=".8"/><path d="M.2 3.2H10.6M3.6 3V1.2H7.2V3" fill="none" stroke="#d6c4c4" stroke-width=".8"/><path d="M3.6 5.4V12M5.4 5.4V12M7.2 5.4V12" stroke="#d6c4c4" stroke-width=".8"/></svg>
<svg style="left:328.6px;top:72.2px" width="15" height="11" viewBox="0 0 15 11"><path d="M.6 .8L10.2 6.2M.8 5.2L10.2 3.2" stroke="#d0d0d0" stroke-width="1.2"/><circle cx="12" cy="2.6" r="1.9" fill="none" stroke="#dcc8c8" stroke-width=".9"/><circle cx="12" cy="7.8" r="1.9" fill="none" stroke="#dcc8c8" stroke-width=".9"/></svg>
<svg style="left:351.8px;top:70.8px" width="11.4" height="14" viewBox="0 0 11.4 14"><path d="M4 .5H8.6L10.8 2.8V10H4Z" fill="#f2f2f2" stroke="#d6d6d6" stroke-width=".7"/><path d="M.5 3.6H5.4L7.6 5.8V13.4H.5Z" fill="#ededed" stroke="#d2d2d2" stroke-width=".7"/><path d="M2 7.6H6M2 9.4H6M2 11.2H6" stroke="#dedede" stroke-width=".6"/></svg>
<svg style="left:374px;top:70.4px" width="11" height="14.4" viewBox="0 0 11 14.4"><rect x=".5" y="1.4" width="10" height="12.4" rx=".8" fill="#e6e6e6" stroke="#d2d2d2" stroke-width=".7"/><rect x="3" y=".4" width="5" height="2.2" fill="#dcdcdc" stroke="#cfcfcf" stroke-width=".4"/><path d="M2.4 4.4H6.8L8.8 6.4V12.4H2.4Z" fill="#f4f4f4" stroke="#d8d8d8" stroke-width=".6"/><path d="M3.6 8H7.4M3.6 9.8H7.4" stroke="#e2e2e2" stroke-width=".6"/></svg>
<svg style="left:395px;top:71.8px" width="12.6" height="12" viewBox="0 0 12.6 12"><path d="M5.4 .6L.6 4.6L5.4 8.6V6.2Q9 5.8 8.8 8.4Q8.6 10.2 6.4 11L7.2 11.4Q12 10.4 11.6 6.8Q11.2 3.2 5.4 3.2Z" fill="#ded6d0" stroke="#d4ccc6" stroke-width=".4" stroke-linejoin="round"/></svg>
<svg style="left:417px;top:71.8px" width="12.6" height="12" viewBox="0 0 12.6 12"><g transform="translate(12.2 0) scale(-1 1)"><path d="M5.4 .6L.6 4.6L5.4 8.6V6.2Q9 5.8 8.8 8.4Q8.6 10.2 6.4 11L7.2 11.4Q12 10.4 11.6 6.8Q11.2 3.2 5.4 3.2Z" fill="#d4d8d6" stroke="#cacecb" stroke-width=".4" stroke-linejoin="round"/></g></svg>
<svg style="left:447px;top:72.1px" width="14.6" height="8" viewBox="0 0 14.6 8"><path d="M3 0.4H13.799999999999999V7.199999999999999H3L0.4 3.8Z" fill="#f3d534" stroke="#d4b01e" stroke-width=".7" stroke-linejoin="round"/><text x="3.2" y="5.6" font-family="Liberation Sans, sans-serif" font-size="6" fill="#6a5a14" textLength="9.6" lengthAdjust="spacingAndGlyphs">abc</text><path d="M3.2 6.1H12.6" stroke="#6a5a14" stroke-width=".5"/></svg>
<svg style="left:470px;top:70.8px" width="14.2" height="14.4" viewBox="0 0 14.2 14.4"><circle cx="5" cy="4.8" r="4.5" fill="#e9c41c" stroke="#2a2a1a" stroke-width=".5"/><path d="M5 4.8L1.2 2.4A4.5 4.5 0 0 0 5 9.3Z" fill="#1f9a44"/><path d="M5 4.8V9.3A4.5 4.5 0 0 0 8.8 2.4Z" fill="#c8101e"/><path d="M5 4.8L1.2 2.4M5 4.8V9.3M5 4.8L8.8 2.4" stroke="#2a2a1a" stroke-width=".4"/><rect x="6" y="10" width="2.2" height="3.8" fill="#f2c81e"/><rect x="8.4" y="6.4" width="2.4" height="7.4" fill="#1f9a44" stroke="#156a2e" stroke-width=".3"/><rect x="11" y="10.6" width="2.4" height="3.2" fill="#b0101a"/></svg>
<svg style="left:490.8px;top:71.2px" width="16.2" height="13.8" viewBox="0 0 16.2 13.8"><rect x=".6" y=".6" width="14.8" height="12.4" fill="#e9effb" stroke="#5a8fe0" stroke-width="1"/><path d="M3.4 2.4H13.6V8.799999999999999H3.4L0.8 5.6Z" fill="#f3d534" stroke="#d4b01e" stroke-width=".7" stroke-linejoin="round"/><text x="3.6" y="7.199999999999999" font-family="Liberation Sans, sans-serif" font-size="6" fill="#6a5a14" textLength="6.6" lengthAdjust="spacingAndGlyphs">ab</text><path d="M3.6 7.699999999999999H12.4" stroke="#6a5a14" stroke-width=".5"/><path d="M11.6 5V9" stroke="#f4f4f4" stroke-width="1.2"/><path d="M11.6 5V9" stroke="#999" stroke-width=".4"/><circle cx="11.6" cy="10.4" r="2.7" fill="#b8242c" stroke="#8e1018" stroke-width=".4"/><circle cx="10.8" cy="9.6" r=".9" fill="#e26a70"/></svg>
<svg style="left:512.4px;top:72px" width="16.2" height="13.8" viewBox="0 0 16.2 13.8"><path d="M3.2 1.4H13.799999999999999V7.799999999999999H3.2L0.6000000000000001 4.6Z" fill="#f3d534" stroke="#d4b01e" stroke-width=".7" stroke-linejoin="round"/><text x="3.4000000000000004" y="6.199999999999999" font-family="Liberation Sans, sans-serif" font-size="6" fill="#6a5a14" textLength="6.6" lengthAdjust="spacingAndGlyphs">ab</text><path d="M3.4000000000000004 6.699999999999999H12.6" stroke="#6a5a14" stroke-width=".5"/><path d="M11.8 4.2V8.2" stroke="#f4f4f4" stroke-width="1.2"/><path d="M11.8 4.2V8.2" stroke="#999" stroke-width=".4"/><circle cx="11.8" cy="9.8" r="2.7" fill="#b8242c" stroke="#8e1018" stroke-width=".4"/><circle cx="11" cy="9" r=".9" fill="#e26a70"/></svg>
<svg style="left:534.2px;top:72px" width="16" height="13.6" viewBox="0 0 16 13.6"><path d="M3.2 1.4H13.399999999999999V7.799999999999999H3.2L0.6000000000000001 4.6Z" fill="#f3d534" stroke="#d4b01e" stroke-width=".7" stroke-linejoin="round"/><text x="3.4000000000000004" y="6.199999999999999" font-family="Liberation Sans, sans-serif" font-size="6" fill="#6a5a14" textLength="9.6" lengthAdjust="spacingAndGlyphs">abc</text><path d="M3.4000000000000004 6.699999999999999H12.2" stroke="#6a5a14" stroke-width=".5"/><path d="M5.4 10.2Q10 6.2 15 10.2Q10 14 5.4 10.2Z" fill="#fff" stroke="#555" stroke-width=".6"/><circle cx="10.2" cy="10.2" r="2" fill="#5a8fd8"/><circle cx="10.2" cy="10.2" r=".9" fill="#111"/></svg>
<svg style="left:556px;top:72px" width="16.2" height="13.8" viewBox="0 0 16.2 13.8"><path d="M3.2 1.4H13.399999999999999V7.799999999999999H3.2L0.6000000000000001 4.6Z" fill="#f3d534" stroke="#d4b01e" stroke-width=".7" stroke-linejoin="round"/><text x="3.4000000000000004" y="6.199999999999999" font-family="Liberation Sans, sans-serif" font-size="6" fill="#6a5a14" textLength="9.6" lengthAdjust="spacingAndGlyphs">abc</text><path d="M3.4000000000000004 6.699999999999999H12.2" stroke="#6a5a14" stroke-width=".5"/><rect x="9" y="7" width="6.6" height="6.6" rx="1" fill="#2f5877" stroke="#244860" stroke-width=".4"/><path d="M10 10.3H12.4V8.4L14.8 10.3L12.4 12.2V10.3" fill="#fff" stroke="#fff" stroke-width=".9" stroke-linejoin="round"/></svg>
<svg style="left:577.6px;top:72px" width="16.2" height="13.8" viewBox="0 0 16.2 13.8"><path d="M3.2 1.4H13.399999999999999V7.799999999999999H3.2L0.6000000000000001 4.6Z" fill="#f3d534" stroke="#d4b01e" stroke-width=".7" stroke-linejoin="round"/><text x="3.4000000000000004" y="6.199999999999999" font-family="Liberation Sans, sans-serif" font-size="6" fill="#6a5a14" textLength="9.6" lengthAdjust="spacingAndGlyphs">abc</text><path d="M3.4000000000000004 6.699999999999999H12.2" stroke="#6a5a14" stroke-width=".5"/><rect x="9" y="7" width="6.6" height="6.6" rx="1" fill="#2f5877" stroke="#244860" stroke-width=".4"/><path d="M11.2 12.4V10.4A1.4 1.4 0 0 1 14 10.4" fill="none" stroke="#fff" stroke-width="1"/><path d="M12.8 10.2H15L13.9 11.8Z" fill="#fff"/></svg>
<svg style="left:599.6px;top:72px" width="16.2" height="13.8" viewBox="0 0 16.2 13.8"><path d="M3.2 1.4H13.399999999999999V7.799999999999999H3.2L0.6000000000000001 4.6Z" fill="#f3d534" stroke="#d4b01e" stroke-width=".7" stroke-linejoin="round"/><text x="3.4000000000000004" y="6.199999999999999" font-family="Liberation Sans, sans-serif" font-size="6" fill="#6a5a14" textLength="9.6" lengthAdjust="spacingAndGlyphs">abc</text><path d="M3.4000000000000004 6.699999999999999H12.2" stroke="#6a5a14" stroke-width=".5"/><rect x="9" y="7" width="6.8" height="6.6" rx="1.2" fill="#d3ac1c" stroke="#bd9814" stroke-width=".4"/><path d="M10.6 12L14 8.6" stroke="#fff" stroke-width="1.5" stroke-linecap="round"/></svg>
<svg style="left:631.8px;top:69.8px" width="16.6" height="16.2" viewBox="0 0 16.6 16.2"><circle cx="8.2" cy="7.2" r="6.9" fill="#8db0dc" stroke="#3b5e92" stroke-width=".6"/><path d="M3.6 4.4Q5.6 2 8 2.6L7.4 5L5 6.4L4.6 9Q2.8 7 3.6 4.4ZM9.6 3.4L12.6 3L13.6 6.4L11.4 8.8L9.6 6.4ZM6 9.6L8.6 9L9.4 11L7 12Z" fill="#54789e" opacity=".8"/><path d="M6.2 8L3.8 12.2M10.2 8L12.6 12.2" stroke="#0a0a0a" stroke-width="2.6"/><ellipse cx="4.8" cy="13.4" rx="2.5" ry="1.9" fill="#fff" stroke="#0a0a0a" stroke-width="1.2"/><ellipse cx="11.6" cy="13.4" rx="2.5" ry="1.9" fill="#fff" stroke="#0a0a0a" stroke-width="1.2"/><rect x="6.6" y="9.2" width="3.2" height="2.2" fill="#0a0a0a"/></svg>
<svg style="left:665.4px;top:70.6px" width="14.4" height="14.4" viewBox="0 0 14.4 14.4"><path d="M4 .6H7.6Q9.4 .6 9.4 2.4V5.6Q9.4 7.2 7.8 7.2H4.6Q2.8 7.2 2.8 9V10.2H1.8Q.4 10.2 .4 8.6V5.6Q.4 4 2 4H6.8V3.4H2.8V2Q2.8 .6 4 .6Z" fill="#2f6aa4" stroke="#245888" stroke-width=".3"/><circle cx="4.4" cy="2" r=".6" fill="#dfe8f2"/><path d="M9.8 13.8H6.2Q4.4 13.8 4.4 12V8.8Q4.4 7.2 6 7.2H9.2Q11 7.2 11 5.4V4.2H12Q13.4 4.2 13.4 5.8V8.8Q13.4 10.4 11.8 10.4H7V11H11V12.4Q11 13.8 9.8 13.8Z" fill="#f7cf3c" stroke="#dcb426" stroke-width=".3"/><path d="M10.6 11.4L13.6 12.8L10.6 14.2" fill="none" stroke="#333" stroke-width=".7"/></svg>
<svg style="left:697.6px;top:70.4px" width="14.2" height="14.6" viewBox="0 0 14.2 14.6"><rect x=".5" y=".5" width="13" height="13.6" rx=".6" fill="#5f8fc8" stroke="#2f3e4e" stroke-width=".7"/><rect x=".6" y=".6" width="3.6" height="13.4" fill="#2a3a4a"/><text x="5.8" y="11" font-family="Liberation Sans, sans-serif" font-size="9.4" fill="#fff">?</text></svg></div><!--/icons2-->

<!-- MAP -->
<div class="abs" id="map" style="left:235.7px;top:91.4px;width:441.9px;height:455.8px;background:#fff;overflow:hidden">
<svg width="441.9" height="455.8" viewBox="235.7 91.4 441.9 455.8" style="left:0;top:0">
<g fill="#ffffbe" stroke="#484848" stroke-width="0.8" stroke-linejoin="round">
<!-- Matanuska-Susitna -->
<path d="M230,85 L462.7,85 L462.7,91.2 L458.4,104.8 L432.6,114.9 L425.8,120.2 L421.5,149.2 L410.1,175 L408.1,184.7 L410.1,194.3 L413.3,200.8 L414.1,208.6 L410.5,232.2 L409.4,252.6 L404,262.3 L390.1,272 L379.3,282.7 L376.1,283.4 L370.7,278.4 L342.8,269.2 L309.5,266.6 L298.8,268.8 L270.8,267.7 L245,270 L235.4,273.5 L230,275 Z"/>
<!-- Anchorage -->
<path d="M568,85 L568,91.2 L563.7,96.6 L555.7,102 L548.7,109.5 L533,110.6 L513.6,119.2 L507.2,127.7 L509.8,156.7 L508.3,167.5 L504.6,174.6 L488.5,180.4 L481,181.5 L468.5,188.3 L462.7,194.3 L453,211.5 L449.8,219.9 L445.9,234.4 L435.2,251.6 L433.5,266.6 L430.9,277.3 L426.6,284.9 L424.4,294.5 L420.1,303.1 L410.5,312.8 L394.4,319.9 L378.2,324 L370.7,318.4 L366.4,318.4 L363.2,323.8 L358.9,345.4 L350.3,353 L339.6,366.3 L339.6,370.2 L342.8,375.5 L353.5,382 L363.2,385.2 L408.3,418.5 L432,431.4 L438.5,438.3 L449.5,442.7 L459.3,451.3 L470.3,456.6 L473.9,460.3 L475.7,466.4 L482.5,471.8 L486.2,477.4 L488.6,485.9 L492.3,492.5 L498.4,496.9 L504,498.1 L508.1,506.2 L522.3,515.9 L528.9,516.9 L539.9,520.8 L547.9,525.7 L569.2,531.1 L576.5,534.3 L588.7,545.7 L593.6,547.6 L598.5,547.6 L604.6,544.8 L615.5,545.2 L619.9,547.4 L638.7,541.6 L650.9,547.4 L660,553 L690,553 L690,85 Z"/>
<!-- island -->
<path d="M230,411 L235.4,409.9 L245,406 L251.5,400.2 L254.7,392.7 L259,372.3 L262.2,363.7 L281.6,356.2 L290.2,356.2 L292.3,361.6 L287.6,379.8 L282.6,387.3 L270.8,398.1 L264.4,408.8 L247.2,415.3 L238.6,417 L230,417 Z"/>
</g>
<g font-family="Liberation Sans, sans-serif" font-size="6.7" fill="#2b2b2b" stroke="#2b2b2b" stroke-width=".1">
<text x="327.9" y="176.4" textLength="53.9" lengthAdjust="spacingAndGlyphs">Matanuska-Susitna</text>
<text x="557.2" y="322.7" textLength="29.5" lengthAdjust="spacingAndGlyphs">Anchorage</text>
</g>
<g fill="#e2401a" stroke="#3a1006" stroke-width=".7">
<circle cx="548.2" cy="244.3" r="1.8"/><circle cx="471" cy="261.6" r="1.8"/><circle cx="453.2" cy="302.4" r="1.8"/>
</g>
<circle cx="378.7" cy="349.7" r="2.7" fill="#f5000c"/>
<g font-family="Liberation Sans, sans-serif" font-size="6.2" fill="#fff" stroke="#fff" stroke-opacity=".8" stroke-width="1.3" stroke-linejoin="round">
<text x="550.1" y="242.0" textLength="36.2" lengthAdjust="spacingAndGlyphs">BRYANT AHP</text>
<text x="428.6" y="258.4" textLength="48.6" lengthAdjust="spacingAndGlyphs">ELMENDORF AFB</text>
<text x="420.8" y="299.3" textLength="37.1" lengthAdjust="spacingAndGlyphs">MERRILL FLD</text>
<text x="325.6" y="347.5" textLength="50.5" lengthAdjust="spacingAndGlyphs" fill="#fff">ANCHORAGE INTL</text>
</g><g font-family="Liberation Sans, sans-serif" font-size="6.2" fill="#fb1c44" stroke="#fb1c44" stroke-width=".18">
<text x="550.1" y="242.0" textLength="36.2" lengthAdjust="spacingAndGlyphs">BRYANT AHP</text>
<text x="428.6" y="258.4" textLength="48.6" lengthAdjust="spacingAndGlyphs">ELMENDORF AFB</text>
<text x="420.8" y="299.3" textLength="37.1" lengthAdjust="spacingAndGlyphs">MERRILL FLD</text>
<text x="325.6" y="347.5" textLength="50.5" lengthAdjust="spacingAndGlyphs" fill="#f91626">ANCHORAGE INTL</text>
</g>
</svg>
</div>


<!-- LEFT: Browser panel -->
<div class="ptitle j" style="left:40.4px;top:92.7px">ブラウザ</div>
<svg style="left:212.8px;top:93.1px" width="7.8" height="7.8" viewBox="0 0 7.8 7.8"><rect x=".4" y=".4" width="7" height="7" rx="1.7" fill="#cdcdcd" stroke="#8e8e8e" stroke-width=".9"/><path d="M2.2 5.6L5.6 2.2" stroke="#8a8a8a" stroke-width=".8"/><rect x="1.5" y="1.5" width="2" height="2" fill="#f4f4f4"/><rect x="4.5" y="4.5" width="1.9" height="1.9" fill="#fbfbfb"/><path d="M3.8 1.8H6V4" fill="none" stroke="#e8e8e8" stroke-width=".7"/></svg><svg style="left:222.0px;top:93.1px" width="7.8" height="7.8" viewBox="0 0 7.8 7.8"><rect x=".4" y=".4" width="7" height="7" rx="1.7" fill="#e4e4e4" stroke="#8e8e8e" stroke-width=".9"/><path d="M2 2L5.8 5.8M5.8 2L2 5.8" stroke="#484848" stroke-width="1"/></svg>
<div id="brw-icons"><svg style="left:42.6px;top:108.9px" width="10" height="10.2" viewBox="0 0 10 10.2"><rect x=".5" y=".5" width="7.6" height="7.6" fill="#fff" stroke="#8a8a8a" stroke-width=".8"/><rect x="5.4" y="6" width="4.2" height="4" rx=".9" fill="#5a9f5a"/><path d="M7.5 6.9V9.1M6.4 8H8.6" stroke="#fff" stroke-width=".9"/></svg>
<svg style="left:59px;top:108.9px" width="9.8" height="9.8" viewBox="0 0 9.8 9.8"><g transform="scale(0.980)"><path d="M1.8 4.8A3.3 3.3 0 0 1 7.5 2.9" fill="none" stroke="#4f86cb" stroke-width="2.3"/><path d="M9.5 .9L9.7 5.3L5.5 4.4Z" fill="#4f86cb"/><path d="M8.2 5.2A3.3 3.3 0 0 1 2.5 7.1" fill="none" stroke="#4f86cb" stroke-width="2.3"/><path d="M.5 9.1L.3 4.7L4.5 5.6Z" fill="#4f86cb"/></g></svg>
<svg style="left:75.8px;top:108px" width="9.2" height="10.6" viewBox="0 0 9.2 10.6"><path d="M.4 1.8H8.8L5.6 5.8V10L3.6 9V5.8Z" fill="#5b8fd0" stroke="#3f72b4" stroke-width=".5" stroke-linejoin="round"/><rect x=".3" y=".3" width="8.6" height="1.6" rx=".5" fill="#f0d23a" stroke="#cfae20" stroke-width=".4"/></svg>
<svg style="left:92.2px;top:108.2px" width="10.4" height="9.8" viewBox="0 0 10.4 9.8"><path d="M.8 .8V8.8M.8 .8H3.6" fill="none" stroke="#8a8a8a" stroke-width=".6"/><rect x="2.2" y="3" width="1.7" height="1.7" fill="#f5a020"/><rect x="2.2" y="6.6" width="1.7" height="1.7" fill="#f5a020"/><path d="M6.8 .4L10 4.2H8.2V9.2H5.4V4.2H3.6Z" fill="#4a7fc0" stroke="#355f98" stroke-width=".5" stroke-linejoin="round"/></svg>
<svg style="left:109.0px;top:109.1px" width="8.8" height="8.8" viewBox="0 0 8.8 8.8"><circle cx="4.4" cy="4.4" r="4.2" fill="#5b8fce" stroke="#4a7fc0" stroke-width=".4"/><text x="3.1000000000000005" y="7.0" font-family="Liberation Serif, serif" font-style="italic" font-weight="bold" font-size="8" fill="#fff">i</text></svg></div><!--/brw-icons-->
<div class="white" style="left:37.2px;top:124.6px;width:193.6px;height:126.2px;overflow:hidden" id="brtree">
 <div class="abs" style="left:0;top:107px;width:184px;height:11.9px;background:#d8d8d8"></div>
</div>
<svg style="left:69.0px;top:128.2px" width="3.2" height="5.2" viewBox="0 0 3.2 5.2"><path d="M0 0L3.2 2.6L0 5.2Z" fill="#4a4a4a"/></svg>
<svg style="left:79.8px;top:126.5px" width="9.4" height="8.6" viewBox="0 0 9.4 8.6"><path d="M.4 .8Q.4 .4 .8 .4L3.5 .4L4.3 1.5L8.6 1.5Q9 1.5 9 1.9L9 7.8Q9 8.2 8.6 8.2L.8 8.2Q.4 8.2 .4 7.8Z" fill="#f3f3f3" stroke="#8e8e8e" stroke-width=".75"/></svg>
<div class="row cap" style="left:93.8px;top:124.6px">MSFT</div>
<svg style="left:69.0px;top:140.1px" width="3.2" height="5.2" viewBox="0 0 3.2 5.2"><path d="M0 0L3.2 2.6L0 5.2Z" fill="#4a4a4a"/></svg>
<svg style="left:79.8px;top:138.4px" width="9.4" height="8.6" viewBox="0 0 9.4 8.6"><path d="M.4 .8Q.4 .4 .8 .4L3.5 .4L4.3 1.5L8.6 1.5Q9 1.5 9 1.9L9 7.8Q9 8.2 8.6 8.2L.8 8.2Q.4 8.2 .4 7.8Z" fill="#f3f3f3" stroke="#8e8e8e" stroke-width=".75"/></svg>
<div class="row" style="left:93.8px;top:136.5px;letter-spacing:-.3px">MyGLGame_step1-1</div>
<svg style="left:67.8px;top:153.1px" width="5.2" height="3.2" viewBox="0 0 5.2 3.2"><path d="M0 0L5.2 0L2.6 3.2Z" fill="#4a4a4a"/></svg>
<svg style="left:79.8px;top:150.2px" width="9.4" height="8.6" viewBox="0 0 9.4 8.6"><path d="M.4 .8Q.4 .4 .8 .4L3.5 .4L4.3 1.5L8.6 1.5Q9 1.5 9 1.9L9 7.8Q9 8.2 8.6 8.2L.8 8.2Q.4 8.2 .4 7.8Z" fill="#f3f3f3" stroke="#858585" stroke-width=".75"/><path d="M.5 1.2L3.4 1.2L4.2 2.3L8.9 2.3L8.9 3.4L.5 3.4Z" fill="#8a8a8a"/><path d="M.5 2.1L2.6 2.1L3.4 3.1L8.9 3.1" fill="none" stroke="#dcdcdc" stroke-width=".5"/></svg>
<div class="row" style="left:93.8px;top:148.3px;letter-spacing:-.18px">qgis_sample_data</div>
<svg style="left:82.2px;top:163.8px" width="3.2" height="5.2" viewBox="0 0 3.2 5.2"><path d="M0 0L3.2 2.6L0 5.2Z" fill="#4a4a4a"/></svg>
<svg style="left:93.0px;top:162.1px" width="9.4" height="8.6" viewBox="0 0 9.4 8.6"><path d="M.4 .8Q.4 .4 .8 .4L3.5 .4L4.3 1.5L8.6 1.5Q9 1.5 9 1.9L9 7.8Q9 8.2 8.6 8.2L.8 8.2Q.4 8.2 .4 7.8Z" fill="#f3f3f3" stroke="#8e8e8e" stroke-width=".75"/></svg>
<div class="row" style="left:107.0px;top:160.2px">climate</div>
<svg style="left:82.2px;top:175.6px" width="3.2" height="5.2" viewBox="0 0 3.2 5.2"><path d="M0 0L3.2 2.6L0 5.2Z" fill="#4a4a4a"/></svg>
<svg style="left:93.0px;top:173.9px" width="9.4" height="8.6" viewBox="0 0 9.4 8.6"><path d="M.4 .8Q.4 .4 .8 .4L3.5 .4L4.3 1.5L8.6 1.5Q9 1.5 9 1.9L9 7.8Q9 8.2 8.6 8.2L.8 8.2Q.4 8.2 .4 7.8Z" fill="#f3f3f3" stroke="#8e8e8e" stroke-width=".75"/></svg>
<div class="row" style="left:107.0px;top:172.0px">csv</div>
<svg style="left:82.2px;top:187.5px" width="3.2" height="5.2" viewBox="0 0 3.2 5.2"><path d="M0 0L3.2 2.6L0 5.2Z" fill="#4a4a4a"/></svg>
<svg style="left:93.0px;top:185.8px" width="9.4" height="8.6" viewBox="0 0 9.4 8.6"><path d="M.4 .8Q.4 .4 .8 .4L3.5 .4L4.3 1.5L8.6 1.5Q9 1.5 9 1.9L9 7.8Q9 8.2 8.6 8.2L.8 8.2Q.4 8.2 .4 7.8Z" fill="#f3f3f3" stroke="#8e8e8e" stroke-width=".75"/></svg>
<div class="row" style="left:107.0px;top:183.9px">gml</div>
<svg style="left:82.2px;top:199.4px" width="3.2" height="5.2" viewBox="0 0 3.2 5.2"><path d="M0 0L3.2 2.6L0 5.2Z" fill="#4a4a4a"/></svg>
<svg style="left:93.0px;top:197.7px" width="9.4" height="8.6" viewBox="0 0 9.4 8.6"><path d="M.4 .8Q.4 .4 .8 .4L3.5 .4L4.3 1.5L8.6 1.5Q9 1.5 9 1.9L9 7.8Q9 8.2 8.6 8.2L.8 8.2Q.4 8.2 .4 7.8Z" fill="#f3f3f3" stroke="#8e8e8e" stroke-width=".75"/></svg>
<div class="row" style="left:107.0px;top:195.8px">gps</div>
<svg style="left:82.2px;top:211.2px" width="3.2" height="5.2" viewBox="0 0 3.2 5.2"><path d="M0 0L3.2 2.6L0 5.2Z" fill="#4a4a4a"/></svg>
<svg style="left:93.0px;top:209.5px" width="9.4" height="8.6" viewBox="0 0 9.4 8.6"><path d="M.4 .8Q.4 .4 .8 .4L3.5 .4L4.3 1.5L8.6 1.5Q9 1.5 9 1.9L9 7.8Q9 8.2 8.6 8.2L.8 8.2Q.4 8.2 .4 7.8Z" fill="#f3f3f3" stroke="#8e8e8e" stroke-width=".75"/></svg>
<div class="row" style="left:107.0px;top:207.6px">grassdata</div>
<svg style="left:81.0px;top:224.3px" width="5.2" height="3.2" viewBox="0 0 5.2 3.2"><path d="M0 0L5.2 0L2.6 3.2Z" fill="#4a4a4a"/></svg>
<svg style="left:93.0px;top:221.4px" width="9.4" height="8.6" viewBox="0 0 9.4 8.6"><path d="M.4 .8Q.4 .4 .8 .4L3.5 .4L4.3 1.5L8.6 1.5Q9 1.5 9 1.9L9 7.8Q9 8.2 8.6 8.2L.8 8.2Q.4 8.2 .4 7.8Z" fill="#f3f3f3" stroke="#858585" stroke-width=".75"/><path d="M.5 1.2L3.4 1.2L4.2 2.3L8.9 2.3L8.9 3.4L.5 3.4Z" fill="#8a8a8a"/><path d="M.5 2.1L2.6 2.1L3.4 3.1L8.9 3.1" fill="none" stroke="#dcdcdc" stroke-width=".5"/></svg>
<div class="row" style="left:107.0px;top:219.5px">projects</div>
<svg style="left:105.4px;top:233.2px" width="10.4" height="10" viewBox="0 0 10.4 10"><circle cx="4.6" cy="4.5" r="3.4" fill="#fff" stroke="#6db444" stroke-width="1.7"/><circle cx="4.9" cy="4.7" r="1" fill="#f2a23a"/><path d="M5.4 5.4L9.2 9.2" stroke="#6db444" stroke-width="1.7"/></svg>
<div class="row" style="left:120.2px;top:231.8px">relations</div>
<svg style="left:82.2px;top:246.8px" width="3.2" height="5.2" viewBox="0 0 3.2 5.2"><path d="M0 0L3.2 2.6L0 5.2Z" fill="#4a4a4a"/></svg>
<svg style="left:93.0px;top:245.1px" width="9.4" height="8.6" viewBox="0 0 9.4 8.6"><path d="M.4 .8Q.4 .4 .8 .4L3.5 .4L4.3 1.5L8.6 1.5Q9 1.5 9 1.9L9 7.8Q9 8.2 8.6 8.2L.8 8.2Q.4 8.2 .4 7.8Z" fill="#f3f3f3" stroke="#8e8e8e" stroke-width=".75"/></svg>
<div class="row" style="left:107.0px;top:243.2px">raster</div>
<!-- v scrollbar -->
<div class="abs" style="left:221.2px;top:125px;width:9.6px;height:125.8px;background:#e3e3e3;border-left:.6px solid #cfcfcf"></div>
<div class="abs" style="left:221.8px;top:125px;width:9px;height:7.8px;background:#f6f6f6;border-bottom:.6px solid #c8c8c8"></div>
<div class="abs" style="left:221.8px;top:242.6px;width:9px;height:8.2px;background:#f6f6f6;border-top:.6px solid #c8c8c8"></div>
<div class="abs" style="left:221.8px;top:150.6px;width:9px;height:19px;background:#fafafa;border-top:.6px solid #c8c8c8;border-bottom:.6px solid #c8c8c8"></div>
<svg style="left:223.6px;top:126.6px" width="5.4" height="3.6" viewBox="0 0 6 4"><path d="M0 4L3 0L6 4Z" fill="#333"/></svg>
<svg style="left:223.6px;top:245px" width="5.4" height="3.6" viewBox="0 0 6 4"><path d="M0 0L3 4L6 0Z" fill="#333"/></svg>
<!-- h scrollbar -->
<div class="abs" style="left:37.2px;top:250.8px;width:184px;height:10px;background:#e3e3e3;border-top:.6px solid #cfcfcf"></div>
<div class="abs" style="left:37.2px;top:251.4px;width:9.6px;height:9.4px;background:#f6f6f6;border-right:.6px solid #c8c8c8"></div>
<div class="abs" style="left:211.6px;top:251.4px;width:9.6px;height:9.4px;background:#f6f6f6;border-left:.6px solid #c8c8c8"></div>
<div class="abs" style="left:46.8px;top:251.4px;width:114px;height:9.4px;background:#fafafa;border-right:.6px solid #c8c8c8"></div>
<svg style="left:40.4px;top:253.6px" width="3.4" height="5" viewBox="0 0 4 6"><path d="M4 0L0 3L4 6Z" fill="#333"/></svg>
<svg style="left:214.8px;top:253.6px" width="3.4" height="5" viewBox="0 0 4 6"><path d="M0 0L4 3L0 6Z" fill="#333"/></svg>

<!-- Statistics panel -->
<div class="ptitle j" style="left:40.4px;top:267.4px">統計</div>
<svg style="left:212.8px;top:267.6px" width="7.8" height="7.8" viewBox="0 0 7.8 7.8"><rect x=".4" y=".4" width="7" height="7" rx="1.7" fill="#cdcdcd" stroke="#8e8e8e" stroke-width=".9"/><path d="M2.2 5.6L5.6 2.2" stroke="#8a8a8a" stroke-width=".8"/><rect x="1.5" y="1.5" width="2" height="2" fill="#f4f4f4"/><rect x="4.5" y="4.5" width="1.9" height="1.9" fill="#fbfbfb"/><path d="M3.8 1.8H6V4" fill="none" stroke="#e8e8e8" stroke-width=".7"/></svg><svg style="left:222.0px;top:267.6px" width="7.8" height="7.8" viewBox="0 0 7.8 7.8"><rect x=".4" y=".4" width="7" height="7" rx="1.7" fill="#e4e4e4" stroke="#8e8e8e" stroke-width=".9"/><path d="M2 2L5.8 5.8M5.8 2L2 5.8" stroke="#484848" stroke-width="1"/></svg>
<div class="abs combo" style="left:37.4px;top:278.7px;width:193.4px;height:14.6px"></div>
<div class="t" style="left:54px;top:280.2px;font-size:9.2px;-webkit-text-stroke:.2px #000">airports</div>
<svg style="left:41px;top:281.5px" width="9" height="9" viewBox="0 0 9 9"><circle cx="2.1" cy="7.1" r=".95" fill="#6a6a6a"/><circle cx="3.4" cy="2.5" r=".95" fill="#6a6a6a"/><circle cx="8.1" cy=".6" r=".95" fill="#6a6a6a"/></svg>
<svg style="left:220.7px;top:284.1px" width="5.4" height="2.9" viewBox="0 0 6 3.6"><path d="M0 0L3 3.6L6 0Z" fill="#444"/></svg>
<div class="abs" style="left:37.4px;top:296px;width:173.3px;height:15px;background:#fff;border:.7px solid #c2c2c2;border-radius:2.2px;box-shadow:0 .5px .6px rgba(0,0,0,.08)"></div>
<div class="abs" style="left:197.4px;top:296.6px;width:12.7px;height:13.8px;background:#f4f4f4;border-left:.6px solid #d0d0d0;border-radius:0 2px 2px 0"></div>
<svg style="left:200.9px;top:302.1px" width="5.2" height="2.9" viewBox="0 0 6 3.6"><path d="M0 0L3 3.6L6 0Z" fill="#444"/></svg>
<div class="abs" style="left:215.2px;top:296px;width:15.6px;height:15px;background:#fafafa;border:.7px solid #bdbdbd;border-radius:2.2px;box-shadow:0 .5px .6px rgba(0,0,0,.1)"></div>
<div class="t" style="left:219.5px;top:293.4px;font-size:16px;line-height:18px;font-weight:bold;color:#6c2f7c;font-family:'Liberation Serif',serif">ε</div>
<div class="white" style="left:37.4px;top:313.4px;width:193.4px;height:75.4px"></div>
<div class="abs" style="left:37.4px;top:313.4px;width:193.4px;height:12.2px;background:#ebebeb;border:.6px solid #dcdcdc"></div>
<div class="abs" style="left:37.4px;top:314.2px;width:132.2px;height:10.4px;background:linear-gradient(#f7f7f7,#eaeaea);border-bottom:.7px solid #c4c4c4"></div>
<div class="abs" style="left:103.2px;top:314.6px;width:.7px;height:9.6px;background:#cfcfcf"></div>
<div class="abs" style="left:169.4px;top:314.6px;width:.7px;height:9.6px;background:#cfcfcf"></div>
<div class="t j" style="left:37.4px;top:313.7px;width:65.8px;text-align:center;font-size:7.2px;color:#3a3a3a">統計量</div>
<div class="t j" style="left:103.2px;top:313.7px;width:66.2px;text-align:center;font-size:7.2px;color:#3a3a3a">値</div>
<div class="abs chk" style="left:37.4px;top:394.1px;width:8.6px;height:8.6px"></div>
<div class="t j" style="left:49.6px;top:392.4px;font-size:8.7px;color:#333">選択した地物のみ</div>
<div id="stat-icons"><svg style="left:183.6px;top:394px" width="8.2" height="9" viewBox="0 0 8.2 9"><path d="M2.8 .4H6L7.8 2.2V6.6H2.8Z" fill="#efefef" stroke="#b4b4b4" stroke-width=".6"/><path d="M.4 2.4H3.8L5.4 4V8.6H.4Z" fill="#e9e9e9" stroke="#a8a8a8" stroke-width=".6"/></svg>
<svg style="left:200.8px;top:393.2px" width="10.2" height="10.2" viewBox="0 0 10.2 10.2"><g transform="scale(1.020)"><path d="M1.8 4.8A3.3 3.3 0 0 1 7.5 2.9" fill="none" stroke="#4f86cb" stroke-width="2.3"/><path d="M9.5 .9L9.7 5.3L5.5 4.4Z" fill="#4f86cb"/><path d="M8.2 5.2A3.3 3.3 0 0 1 2.5 7.1" fill="none" stroke="#4f86cb" stroke-width="2.3"/><path d="M.5 9.1L.3 4.7L4.5 5.6Z" fill="#4f86cb"/></g></svg></div><!--/stat-icons-->
<div class="abs" style="left:215.4px;top:392.2px;width:15.2px;height:12.4px;background:#fafafa;border:.7px solid #bdbdbd;border-radius:2.2px;box-shadow:0 .5px .6px rgba(0,0,0,.1)"></div>
<div class="t" style="left:219.2px;top:393px;font-size:8px;line-height:10px;color:#333;letter-spacing:.2px">...</div>
<svg style="left:226.2px;top:400.4px" width="3" height="2" viewBox="0 0 3 2"><path d="M0 0L1.5 2L3 0Z" fill="#333"/></svg>

<!-- Layers panel -->
<div class="ptitle j" style="left:40.4px;top:412.2px">レイヤー</div>
<svg style="left:212.8px;top:412.6px" width="7.8" height="7.8" viewBox="0 0 7.8 7.8"><rect x=".4" y=".4" width="7" height="7" rx="1.7" fill="#cdcdcd" stroke="#8e8e8e" stroke-width=".9"/><path d="M2.2 5.6L5.6 2.2" stroke="#8a8a8a" stroke-width=".8"/><rect x="1.5" y="1.5" width="2" height="2" fill="#f4f4f4"/><rect x="4.5" y="4.5" width="1.9" height="1.9" fill="#fbfbfb"/><path d="M3.8 1.8H6V4" fill="none" stroke="#e8e8e8" stroke-width=".7"/></svg><svg style="left:222.0px;top:412.6px" width="7.8" height="7.8" viewBox="0 0 7.8 7.8"><rect x=".4" y=".4" width="7" height="7" rx="1.7" fill="#e4e4e4" stroke="#8e8e8e" stroke-width=".9"/><path d="M2 2L5.8 5.8M5.8 2L2 5.8" stroke="#484848" stroke-width="1"/></svg>
<div id="lyr-icons"><svg style="left:42.2px;top:428px" width="10.6" height="10" viewBox="0 0 10.6 10"><path d="M6.4 4.2L9.8 .8" stroke="#e08a2a" stroke-width="1.7" stroke-linecap="round"/><path d="M.6 5.2L4.6 3.4L7.4 6.2L5.2 9.4Z" fill="#e9c02c"/><path d="M.6 5.2L2.8 4.2L5 8.6L3.6 8.2Z" fill="#d8362e"/><path d="M4.6 3.4L7.4 6.2L6.4 7.6L3.4 4Z" fill="#4a7fc0"/></svg>
<svg style="left:59.2px;top:427.6px" width="10.8" height="10.8" viewBox="0 0 10.8 10.8"><path d="M1 9.8V4.4L3.6 2.2V9.8Z" fill="#d6d6d6" stroke="#8c8c8c" stroke-width=".5"/><path d="M3.6 9.8V1.4Q4.6 .2 5.6 1.4V9.8Z" fill="#c4ccd4" stroke="#7c8894" stroke-width=".5"/><path d="M5.6 3L7.6 4.4V9.8H5.6Z" fill="#dcdcdc" stroke="#8c8c8c" stroke-width=".5"/><rect x="5.8" y="6" width="4.6" height="4.4" rx=".9" fill="#5a9f5a"/><path d="M8.1 6.9V9.5M6.8 8.2H9.4" stroke="#fff" stroke-width="1"/></svg>
<svg style="left:75px;top:428.6px" width="13" height="9.6" viewBox="0 0 13 9.6"><path d="M.4 4Q5.4 -.8 11 4Q5.4 8.6 .4 4Z" fill="#e4e4e4" stroke="#9a9a9a" stroke-width=".6"/><circle cx="5.6" cy="4" r="2.3" fill="#5a86c2"/><circle cx="5.6" cy="4" r="1" fill="#1c3a66"/><path d="M9.4 7.4H12.2L10.8 9.2Z" fill="#444"/></svg>
<svg style="left:92px;top:427.4px" width="9.2" height="10.6" viewBox="0 0 9.2 10.6"><path d="M.4 1.8H8.8L5.6 5.8V10L3.6 9V5.8Z" fill="#5b8fd0" stroke="#3f72b4" stroke-width=".5" stroke-linejoin="round"/><rect x=".3" y=".3" width="8.6" height="1.6" rx=".5" fill="#f0d23a" stroke="#cfae20" stroke-width=".4"/></svg>
<div class="t" style="left:108.6px;top:423.4px;font-family:'Liberation Serif',serif;font-size:12.5px;font-weight:bold;line-height:14px;color:#6c2f7c">ε</div>
<svg style="left:114.4px;top:433.6px" width="4.6" height="4.2" viewBox="0 0 4.6 4.2"><path d="M.4 4V.6H4.2V4" fill="none" stroke="#555" stroke-width=".7"/></svg>
<svg style="left:123.2px;top:431.8px" width="4.2" height="2.6" viewBox="0 0 4.2 2.6"><path d="M0 0L4.2 0L2.1 2.6Z" fill="#444"/></svg>
<svg style="left:133.2px;top:428.2px" width="10.4" height="9.8" viewBox="0 0 10.4 9.8"><path d="M.8 .8V8.8M.8 .8H3.6" fill="none" stroke="#8a8a8a" stroke-width=".6"/><rect x="2.2" y="3" width="1.7" height="1.7" fill="#f5a020"/><rect x="2.2" y="6.6" width="1.7" height="1.7" fill="#f5a020"/><path d="M6.8 9.4L10 5.6H8.2V.6H5.4V5.6H3.6Z" fill="#4a7fc0" stroke="#355f98" stroke-width=".5" stroke-linejoin="round"/></svg>
<svg style="left:149.8px;top:428.2px" width="10.4" height="9.8" viewBox="0 0 10.4 9.8"><path d="M.8 .8V8.8M.8 .8H3.6" fill="none" stroke="#8a8a8a" stroke-width=".6"/><rect x="2.2" y="3" width="1.7" height="1.7" fill="#f5a020"/><rect x="2.2" y="6.6" width="1.7" height="1.7" fill="#f5a020"/><path d="M6.8 .4L10 4.2H8.2V9.2H5.4V4.2H3.6Z" fill="#4a7fc0" stroke="#355f98" stroke-width=".5" stroke-linejoin="round"/></svg>
<svg style="left:166.4px;top:428.6px" width="10" height="10" viewBox="0 0 10 10"><rect x=".5" y=".5" width="7.4" height="7.4" fill="#fff" stroke="#8a8a8a" stroke-width=".8"/><circle cx="7.4" cy="7.4" r="2.2" fill="#e2464a"/><path d="M6.2 7.4H8.6" stroke="#fff" stroke-width=".9"/></svg></div><!--/lyr-icons-->
<div class="white" style="left:37.4px;top:443.4px;width:193.4px;height:104px"></div>
<div class="abs" style="left:37.4px;top:443.4px;width:193.4px;height:12px;background:#d7d7d7"></div>
<div class="abs chk" style="left:53px;top:445.5px;width:8.7px;height:8.7px;border-color:#d2d2d2"></div>
<div class="abs chk" style="left:53px;top:457.5px;width:8.7px;height:8.7px;border-color:#d2d2d2"></div>
<svg style="left:54.4px;top:446.5px" width="6.6" height="6.6" viewBox="0 0 6 6"><path d="M.6 3.1L2.3 5.2L5.4 .6" fill="none" stroke="#222" stroke-width="1.15"/></svg>
<svg style="left:54.4px;top:458.5px" width="6.6" height="6.6" viewBox="0 0 6 6"><path d="M.6 3.1L2.3 5.2L5.4 .6" fill="none" stroke="#222" stroke-width="1.15"/></svg>
<div class="abs" style="left:70.3px;top:448.6px;width:2.4px;height:2.4px;border-radius:50%;background:#d8522e;box-shadow:0 0 0 .4px #5a2a1a"></div>
<div class="abs" style="left:66px;top:456.7px;width:10.7px;height:10.3px;background:#ffffbe;border:.7px solid #b0b0a2"></div>
<div class="t" style="left:80.5px;top:443.7px;font-size:9.25px;font-weight:bold;color:#161616;text-decoration:underline;text-decoration-thickness:.7px;text-underline-offset:1px">airports</div>
<div class="t" style="left:80.5px;top:455.7px;font-size:9.1px;font-weight:bold;color:#161616">regions</div>

<!-- status bar -->
<div class="abs" style="left:39.6px;top:550.2px;width:132px;height:15.5px;background:#fff;border:.7px solid #c2c2c2;border-radius:2.6px"></div>
<svg style="left:45.2px;top:554.4px" width="8.8" height="8.8" viewBox="0 0 8 8"><circle cx="3.1" cy="3.1" r="2.4" fill="none" stroke="#888" stroke-width=".9"/><path d="M4.9 4.9L7.3 7.3" stroke="#888" stroke-width="1" stroke-linecap="round"/></svg>
<div class="t j" style="left:58.4px;top:552.2px;font-size:8.7px;color:#858585">検索（<span style="color:#505050;font-family:'DejaVu Sans',sans-serif;font-weight:bold;font-size:9.8px;line-height:8px;position:relative;top:.2px;letter-spacing:.2px">⌘</span><span style="color:#505050;-webkit-text-stroke:.25px #505050">K</span>）</div>


<!-- RIGHT: Identify results panel -->
<div class="ptitle j" style="left:684.9px;top:92.7px">地物情報</div>
<svg style="left:969.2px;top:93.1px" width="7.8" height="7.8" viewBox="0 0 7.8 7.8"><rect x=".4" y=".4" width="7" height="7" rx="1.7" fill="#cdcdcd" stroke="#8e8e8e" stroke-width=".9"/><path d="M2.2 5.6L5.6 2.2" stroke="#8a8a8a" stroke-width=".8"/><rect x="1.5" y="1.5" width="2" height="2" fill="#f4f4f4"/><rect x="4.5" y="4.5" width="1.9" height="1.9" fill="#fbfbfb"/><path d="M3.8 1.8H6V4" fill="none" stroke="#e8e8e8" stroke-width=".7"/></svg><svg style="left:978.4px;top:93.1px" width="7.8" height="7.8" viewBox="0 0 7.8 7.8"><rect x=".4" y=".4" width="7" height="7" rx="1.7" fill="#e4e4e4" stroke="#8e8e8e" stroke-width=".9"/><path d="M2 2L5.8 5.8M5.8 2L2 5.8" stroke="#484848" stroke-width="1"/></svg>
<div id="idf-icons"><svg style="left:687.6px;top:108.6px" width="10" height="9.6" viewBox="0 0 10 9.6"><rect x=".4" y=".4" width="9.2" height="8.8" rx=".8" fill="#c4d8f2" stroke="#9bbbe6" stroke-width=".6"/><rect x="1.6" y="2" width="1.8" height="1.6" fill="#fff"/><rect x="4.4" y="2" width="4" height="1.6" fill="#fff"/><rect x="1.6" y="5.4" width="1.8" height="1.6" fill="#fff"/><rect x="4.4" y="5.4" width="4" height="1.6" fill="#fff"/></svg>
<div class="abs" style="left:704.2px;top:108.4px;width:.6px;height:10px;background:#dcdcdc"></div>
<div class="abs" style="left:757.7px;top:108.4px;width:.6px;height:10px;background:#dcdcdc"></div>
<div class="abs" style="left:778.8px;top:108.4px;width:.6px;height:10px;background:#dcdcdc"></div>
<svg style="left:709.4px;top:108.6px" width="10.4" height="9.8" viewBox="0 0 10.4 9.8"><path d="M.8 .8V8.8M.8 .8H3.6" fill="none" stroke="#8a8a8a" stroke-width=".6"/><rect x="2.2" y="3" width="1.7" height="1.7" fill="#f5a020"/><rect x="2.2" y="6.6" width="1.7" height="1.7" fill="#f5a020"/><path d="M6.8 9.4L10 5.6H8.2V.6H5.4V5.6H3.6Z" fill="#4a7fc0" stroke="#355f98" stroke-width=".5" stroke-linejoin="round"/></svg>
<svg style="left:725.6px;top:108.6px" width="10.4" height="9.8" viewBox="0 0 10.4 9.8"><path d="M.8 .8V8.8M.8 .8H3.6" fill="none" stroke="#8a8a8a" stroke-width=".6"/><rect x="2.2" y="3" width="1.7" height="1.7" fill="#f5a020"/><rect x="2.2" y="6.6" width="1.7" height="1.7" fill="#f5a020"/><path d="M6.8 .4L10 4.2H8.2V9.2H5.4V4.2H3.6Z" fill="#4a7fc0" stroke="#355f98" stroke-width=".5" stroke-linejoin="round"/></svg>
<svg style="left:741.6px;top:108.6px" width="10.4" height="9.8" viewBox="0 0 10.4 9.8"><path d="M3 .2L3.9 2.2L6 2.4L4.4 3.8L5 6L3 4.8L1 6L1.6 3.8L0 2.4L2.1 2.2Z" fill="#f8d020" stroke="#e0a810" stroke-width=".3"/><rect x="2.2" y="6.8" width="1.7" height="1.7" fill="#f5a020"/><path d="M6.8 9.4L10 5.6H8.2V.6H5.4V5.6H3.6Z" fill="#4a7fc0" stroke="#355f98" stroke-width=".5" stroke-linejoin="round"/></svg>
<svg style="left:763.2px;top:108.4px" width="11" height="10.4" viewBox="0 0 11 10.4"><rect x=".5" y=".5" width="6.4" height="6.4" fill="#f3d534" stroke="#c9a41c" stroke-width=".5"/><rect x="5.6" y="5.2" width="5" height="5" rx="1" fill="#d93a3a"/><circle cx="8.1" cy="7.7" r="1.5" fill="none" stroke="#fff" stroke-width=".7"/><path d="M6.8 9L9.4 6.4" stroke="#fff" stroke-width=".7"/></svg>
<svg style="left:784.8px;top:108.6px" width="8.4" height="9.6" viewBox="0 0 8.4 9.6"><path d="M2.8 .4H6L7.8 2.2V7H2.8Z" fill="#efefef" stroke="#a0a0a0" stroke-width=".6"/><path d="M.4 2.4H3.8L5.4 4V9H.4Z" fill="#e6e6e6" stroke="#8e8e8e" stroke-width=".6"/><path d="M1.4 5.4H4.2M1.4 7H4.2" stroke="#bcbcbc" stroke-width=".5"/></svg>
<svg style="left:801px;top:109px" width="9.4" height="8.6" viewBox="0 0 9.4 8.6"><rect x="2" y=".4" width="5.2" height="3" fill="#ececec" stroke="#d4d4d4" stroke-width=".5"/><rect x=".4" y="2.8" width="8.4" height="3.8" rx=".8" fill="#dadada" stroke="#cdcdcd" stroke-width=".5"/><rect x="2" y="5.4" width="5.2" height="2.8" fill="#f2f2f2" stroke="#d4d4d4" stroke-width=".5"/></svg>
<svg style="left:817px;top:108.2px" width="10.4" height="10.4" viewBox="0 0 10.4 10.4"><rect x=".4" y=".4" width="8.6" height="8.6" fill="#e8e8e8" stroke="#8c8c8c" stroke-width=".6"/><path d="M.4 5.6H9" stroke="#8c8c8c" stroke-width=".5"/><circle cx="3.6" cy="3.2" r="2.5" fill="#3a66b8"/><text x="2.7" y="5" font-family="Liberation Serif, serif" font-style="italic" font-weight="bold" font-size="5" fill="#fff">i</text><g transform="translate(5.2 4.6) scale(.62) rotate(-18)"><path d="M0 0L0 8.2L2 6.4L3.6 9.8L5.2 9L3.6 5.8L6.2 5.6Z" fill="#fff" stroke="#2a2a2a" stroke-width=".8" stroke-linejoin="round"/></g></svg>
<svg style="left:831.8px;top:112.2px" width="4.4" height="2.6" viewBox="0 0 4.4 2.6"><path d="M0 0L4.4 0L2.2 2.6Z" fill="#444"/></svg></div><!--/idf-icons-->
<div class="white" style="left:682.4px;top:125.2px;width:304.2px;height:377.9px"></div>
<div class="abs" style="left:682.4px;top:125.2px;width:304.2px;height:10.5px;background:linear-gradient(#f8f8f8,#ebebeb);border-bottom:.8px solid #c2c2c2"></div>
<div class="abs" style="left:789.6px;top:124.8px;width:.7px;height:10.4px;background:#cfcfcf"></div>
<div class="t j" style="left:684.3px;top:124.7px;font-size:7.2px;color:#4a4a4a">地物</div>
<div class="t j" style="left:792.2px;top:124.7px;font-size:7.2px;color:#4a4a4a">値</div>

<svg style="left:687.6px;top:139.8px" width="4.8" height="3" viewBox="0 0 4.8 3"><path d="M0 0L4.8 0L2.4 3Z" fill="#4a4a4a"/></svg>
<div class="row j" style="left:698.4px;top:135.0px;color:#000;font-size:9.1px">airports</div>
<div class="abs" style="left:682.4px;top:146.4px;width:304.2px;height:10.6px;background:#0b5cd5"></div>
<svg style="left:700.0px;top:150.4px" width="4.8" height="3" viewBox="0 0 4.8 3"><path d="M0 0L4.8 0L2.4 3Z" fill="#0a2a6a"/></svg>
<div class="row j ns" style="left:711.9px;top:145.6px;color:#7fa2ea;font-size:8.5px">タイトル</div>
<div class="row cap" style="left:792.5px;top:145.6px;color:#fff">ANCHORAGE INTL</div>
<svg style="left:714.4px;top:159.9px" width="3" height="4.8" viewBox="0 0 3 4.8"><path d="M0 0L3 2.4L0 4.8Z" fill="#4a4a4a"/></svg>
<div class="row j ns" style="left:724.2px;top:156.2px;color:#000;font-size:8.7px">(派生した属性)</div>
<div class="abs" style="left:682.4px;top:167.6px;width:304.2px;height:10.6px;background:#f4f4f4"></div>
<svg style="left:714.4px;top:170.5px" width="3" height="4.8" viewBox="0 0 3 4.8"><path d="M0 0L3 2.4L0 4.8Z" fill="#4a4a4a"/></svg>
<div class="row j ns" style="left:724.2px;top:166.8px;color:#000;font-size:8.7px">(アクション)</div>
<div class="row j cap" style="left:724.2px;top:177.4px;color:#000;font-size:9.1px">ID</div>
<div class="row" style="left:792.5px;top:177.4px;color:#000">49</div>
<div class="abs" style="left:682.4px;top:188.8px;width:304.2px;height:10.6px;background:#f4f4f4"></div>
<div class="row j" style="left:724.2px;top:188.0px;color:#000;font-size:9.1px">fk_region</div>
<div class="row" style="left:792.5px;top:188.0px;color:#000">3</div>
<div class="row j cap" style="left:724.2px;top:198.6px;color:#000;font-size:9.1px;letter-spacing:-.68px">ELEV</div>
<div class="row" style="left:792.5px;top:198.6px;color:#000">129.000</div>
<div class="abs" style="left:682.4px;top:210.0px;width:304.2px;height:10.6px;background:#f4f4f4"></div>
<div class="row j cap" style="left:724.2px;top:209.2px;color:#000;font-size:9.1px">NAME</div>
<div class="row cap" style="left:792.5px;top:209.2px;color:#000">ANCHORAGE INTL</div>
<div class="row j cap" style="left:724.2px;top:219.8px;color:#000;font-size:9.1px;letter-spacing:-.78px">USE</div>
<div class="row" style="left:792.5px;top:219.8px;color:#000">Civilian/Public</div>

<div class="t j" style="left:685.4px;top:509.3px;font-size:8.6px;color:#333">モード</div>
<div class="abs combo" style="left:715px;top:507.3px;width:129.6px;height:15.3px"></div>
<div class="t j" style="left:719px;top:509.2px;font-size:8.4px;color:#222">カレントレイヤ</div>
<svg style="left:834.4px;top:513.9px" width="4.9" height="2.9" viewBox="0 0 6 3.6"><path d="M0 0L3 3.6L6 0Z" fill="#3e3e3e"/></svg>
<div class="abs chk" style="left:873px;top:510.8px;width:8.9px;height:8.9px"></div>
<div class="t j" style="left:885.8px;top:509.2px;font-size:8.45px;color:#333">自動的にフォームを開く</div>
<div class="t j" style="left:685.4px;top:529.4px;font-size:8.6px;color:#b9b9b9">ビュー</div>
<div class="abs combo" style="left:715px;top:528.1px;width:51.8px;height:15.3px;background:#f3f3f3;border-color:#d2d2d2;box-shadow:none"></div>
<div class="t j" style="left:719px;top:529.8px;font-size:8.4px;color:#b5b5b5">ツリー</div>
<svg style="left:757.2px;top:534.6px" width="5.4" height="3.2" viewBox="0 0 6 3.6"><path d="M0 0L3 3.6L6 0Z" fill="#b0b0b0"/></svg>
<div class="abs" style="left:954.3px;top:529.9px;width:29.4px;height:11.6px;background:#fbfbfb;border:.7px solid #b9b9b9;border-radius:2px;box-shadow:0 .5px .6px rgba(0,0,0,.1)"></div>
<div class="t j" style="left:954.3px;top:529.6px;width:29.4px;text-align:center;font-size:7.2px;color:#333">ヘルプ</div>

<!-- status bar right part -->
<div class="t j" style="left:475.4px;top:553.0px;font-size:7.2px;color:#333">座標</div>
<div class="abs sbox" style="left:492.4px;top:551.4px;width:74px;height:14.2px"></div>
<div class="t sb" style="left:498px;top:553.1px">-149.9878,61.1700</div>
<div class="t j" style="left:588.8px;top:553.0px;font-size:7.2px;color:#333">縮尺</div>
<div class="abs sbox" style="left:605.2px;top:551.4px;width:61.4px;height:14.2px"></div>
<div class="abs" style="left:653.6px;top:552px;width:12.4px;height:13px;background:#f6f6f6;border-left:.6px solid #d4d4d4;border-radius:0 2px 2px 0"></div>
<svg style="left:657px;top:557.2px" width="5.2" height="3" viewBox="0 0 6 3.6"><path d="M0 0L3 3.6L6 0Z" fill="#444"/></svg>
<div class="t sb" style="left:608.2px;top:553.1px">1:388612</div>
<div class="t j" style="left:688.8px;top:553.0px;font-size:7.2px;color:#333">拡大</div>
<div class="abs sbox" style="left:705.5px;top:551.4px;width:64.4px;height:14.2px"></div>
<div class="t sb" style="left:708.6px;top:553.1px">100%</div>
<div class="abs spin" style="left:760.2px;top:552px"></div>
<div class="t j" style="left:775.4px;top:553.0px;font-size:7.2px;color:#333">回転</div>
<div class="abs sbox" style="left:796.2px;top:551.4px;width:61.2px;height:14.2px"></div>
<div class="t sb" style="left:799.4px;top:553.1px">0.0°</div>
<div class="abs spin" style="left:847.8px;top:552px"></div>
<div class="abs chk" style="left:861.4px;top:553.9px;width:8.8px;height:8.8px"></div>
<svg style="left:863px;top:555.4px" width="6" height="6" viewBox="0 0 6 6"><path d="M.6 3.1L2.3 5.2L5.4 .6" fill="none" stroke="#222" stroke-width="1.15"/></svg>
<div class="t j" style="left:874.6px;top:553.0px;font-size:7.2px;color:#5a5a5a">レンダ</div>
<div class="t sb" style="left:919.6px;top:553.1px;font-weight:bold;color:#222">EPSG:2964</div>
<div id="sb-icons"><svg style="left:569.2px;top:552.6px" width="10.2" height="10.8" viewBox="0 0 10.2 10.8"><g transform="rotate(-35 5 5.4)"><rect x="2.2" y="1" width="5.6" height="8.8" rx="2.6" fill="#3a3a3a" stroke="#1e1e1e" stroke-width=".5"/><path d="M5 1V4.6M2.4 4.6H7.6" stroke="#eee" stroke-width=".6"/></g><path d="M1 9.8L9.4 .8" stroke="#2a2a2a" stroke-width=".8"/><circle cx="7.6" cy="7.4" r="1.9" fill="none" stroke="#c23a3a" stroke-width=".6"/></svg>
<svg style="left:674.8px;top:553.4px" width="8.4" height="10.2" viewBox="0 0 8.4 10.2"><path d="M2 4.6V3A2.2 2.2 0 0 1 6.4 3V4.6" fill="none" stroke="#ababab" stroke-width="1.3"/><rect x=".4" y="4.4" width="7.6" height="5.6" rx=".8" fill="#747474"/></svg>
<svg style="left:906.6px;top:553.4px" width="10.6" height="10" viewBox="0 0 10.6 10"><circle cx="5.3" cy="5.4" r="4" fill="#8a8a8a" stroke="#555" stroke-width=".6"/><path d="M1.4 5.4H9.2M5.3 1.4V9.4M2.8 2.6Q5.3 4.2 7.8 2.6M2.8 8.2Q5.3 6.6 7.8 8.2" fill="none" stroke="#e4e4e4" stroke-width=".5"/><path d="M.2 4.6L5.3 .6L10.4 4.6Z" fill="#555"/><path d="M.2 4.8H10.4" stroke="#555" stroke-width=".9"/></svg>
<svg style="left:971.6px;top:553.4px" width="11" height="10.4" viewBox="0 0 11 10.4"><ellipse cx="5.2" cy="4.4" rx="5" ry="4.2" fill="#575757"/><path d="M6.4 7.6L10 10L8.6 6.6Z" fill="#575757"/><rect x="2" y="3.6" width="1.6" height="1.5" fill="#ddd"/><rect x="4.4" y="3.6" width="1.6" height="1.5" fill="#ddd"/><rect x="6.8" y="3.6" width="1.6" height="1.5" fill="#ddd"/></svg></div><!--/sb-icons-->

</div></div></div>
</body>
</html>
